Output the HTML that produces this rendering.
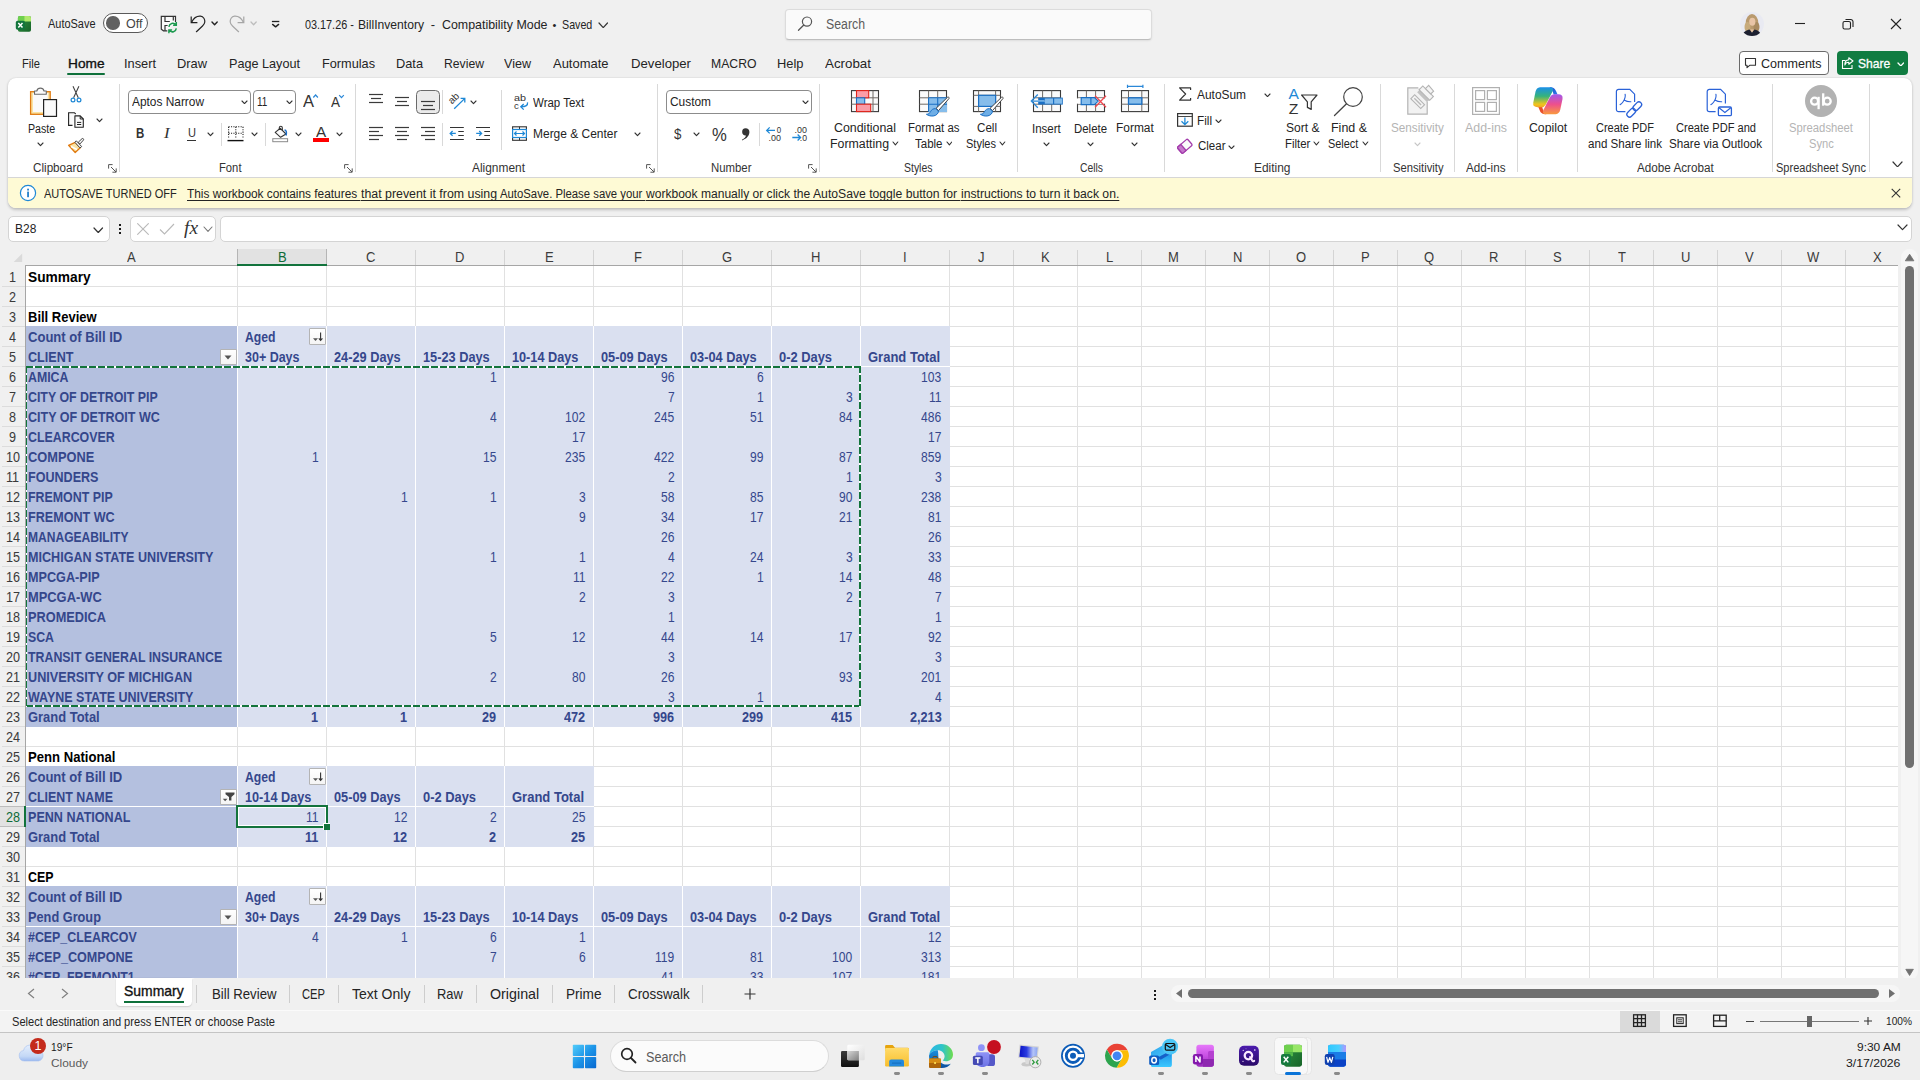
<!DOCTYPE html>
<html lang="en"><head><meta charset="utf-8"><title>03.17.26 - BillInventory - Excel</title>
<style>
*{margin:0;padding:0;box-sizing:border-box}
html,body{width:1920px;height:1080px;overflow:hidden;background:#f0f0f0}
body{position:relative;font-family:"Liberation Sans",sans-serif;color:#242424}
.a{position:absolute;display:block}
.t{position:absolute;display:block;white-space:nowrap;transform-origin:0 0;line-height:normal;font-family:"Liberation Sans",sans-serif}
.b{font-weight:bold}
.i{font-style:italic}
.sf{font-family:"Liberation Serif",serif}
.gl{position:absolute;left:0;top:0;right:0;bottom:0}
.gl i{position:absolute;top:0;bottom:0;width:1px;background:#e1e1e1}
.gl b{position:absolute;left:0;right:0;height:1px;background:#e1e1e1}
</style></head>
<body>
<svg class="a" style="left:14px;top:14px" width="19" height="20" viewBox="14 14 19 20"><defs><linearGradient id="xa1" x1="0" y1="0" x2="1" y2="1"><stop offset="0" stop-color="#2f9444"/><stop offset="1" stop-color="#176428"/></linearGradient></defs><rect x="17.900" y="16.100" width="13.100" height="15.600" rx="1.800" fill="url(#xa1)"/><path d="M17.900 17.900a1.800 1.800 0 0 1 1.800-1.800h4.500v5.300h-6.300z" fill="#6fd04e"/><path d="M24.200 16.100h5a1.800 1.800 0 0 1 1.800 1.800v3.500h-6.800z" fill="#b0ea6c"/><rect x="15.800" y="20.700" width="9.200" height="9.100" rx="1.800" fill="#12753c"/><path d="M18.300 23l4.200 4.600M22.500 23l-4.200 4.600" stroke="#fff" stroke-width="1.500"/></svg>
<span class="t" style="left:48.30px;top:16.67px;font-size:12.3px;transform:scaleX(0.8905);color:#242424;">AutoSave</span>
<div class="a" style="left:103px;top:13px;width:45px;height:20px;background:#fff;border:1px solid #5a5a5a;border-radius:10px;"></div>
<div class="a" style="left:106.2px;top:16.3px;width:13.4px;height:13.4px;background:#616161;border-radius:50%;"></div>
<span class="t" style="left:125.50px;top:16.67px;font-size:12.3px;transform:scaleX(1.0198);color:#444;">Off</span>
<svg class="a" style="left:159px;top:14px" width="21" height="20" viewBox="159 14 21 20"><path d="M175.500 22V16.400H161.300V29.200L163.500 30.800H167.300" fill="#fafafa" stroke="#333" stroke-width="1.200"/><path d="M165 16.400V21.500H169.800M173.300 16.400V20.600M165 30.800V25.500H167.600" fill="none" stroke="#333" stroke-width="1.200"/><path d="M168.900 26.800a3.900 3.900 0 0 1 6.900-2M176.300 22v3.200h-3.200M176.300 28.400a3.900 3.900 0 0 1-6.900 2M168.900 33.200v-3.200h3.200" fill="none" stroke="#1d9a50" stroke-width="1.500"/></svg>
<svg class="a" style="left:189px;top:14px" width="19" height="20" viewBox="189 14 19 20"><path d="M191.200 16.400V22.600H197.400" fill="none" stroke="#222" stroke-width="1.200"/><path d="M191.600 22.300C193.800 17.800 197.800 16 200.500 16.200 203.600 16.500 205 19.500 204.800 22 204.600 24 203.600 25 202.500 26L196.400 31.700" fill="none" stroke="#222" stroke-width="1.200" stroke-linecap="round"/></svg>
<svg class="a" style="left:211.0px;top:20.95px;" width="7.2" height="4.7" viewBox="0 0 7.2 4.7"><path d="M1 1 L3.6 3.7 L6.2 1" fill="none" stroke="#222" stroke-width="1.4" stroke-linecap="round" stroke-linejoin="round"/></svg>
<svg class="a" style="left:228px;top:14px" width="19" height="20" viewBox="228 14 19 20"><path d="M243.800 16.400V22.600H237.600" fill="none" stroke="#a6a6a6" stroke-width="1.200"/><path d="M243.400 22.300C241.200 17.800 237.200 16 234.500 16.200 231.400 16.500 230 19.500 230.200 22 230.400 24 231.400 25 232.500 26L238.600 31.700" fill="none" stroke="#a6a6a6" stroke-width="1.200" stroke-linecap="round"/></svg>
<svg class="a" style="left:249.9px;top:20.95px;" width="7.2" height="4.7" viewBox="0 0 7.2 4.7"><path d="M1 1 L3.6 3.7 L6.2 1" fill="none" stroke="#bdbdbd" stroke-width="1.3" stroke-linecap="round" stroke-linejoin="round"/></svg>
<svg class="a" style="left:270px;top:19px" width="12" height="10" viewBox="270 19 12 10"><path d="M271.900 21.500h7.400" stroke="#222" stroke-width="1.300"/><path d="M272.600 24.400 275.600 26.900l3-2.500" fill="none" stroke="#222" stroke-width="1.400" stroke-linecap="round" stroke-linejoin="round"/></svg>
<span class="t" style="left:305.00px;top:17.23px;font-size:13px;transform:scaleX(0.8335);color:#242424;">03.17.26 -</span>
<span class="t" style="left:358.00px;top:17.23px;font-size:13px;transform:scaleX(0.9335);color:#242424;">BillInventory</span>
<span class="t" style="left:430.70px;top:17.23px;font-size:13px;color:#242424;">-</span>
<span class="t" style="left:441.60px;top:17.23px;font-size:13px;transform:scaleX(0.9543);color:#242424;">Compatibility Mode</span>
<span class="t" style="left:552.50px;top:19.05px;font-size:11px;color:#242424;">•</span>
<span class="t" style="left:562.40px;top:17.23px;font-size:13px;transform:scaleX(0.8220);color:#242424;">Saved</span>
<svg class="a" style="left:597.75px;top:21.7px;" width="10.5" height="6.6" viewBox="0 0 10.5 6.6"><path d="M1 1 L5.25 5.6 L9.5 1" fill="none" stroke="#333" stroke-width="1.2" stroke-linecap="round" stroke-linejoin="round"/></svg>
<div class="a" style="left:785px;top:8.5px;width:367px;height:31px;background:#fafafa;border:1px solid #dcdcdc;border-bottom-color:#bdbdbd;border-radius:4px;box-shadow:0 1px 2px rgba(0,0,0,.08);"></div>
<svg class="a" style="left:797px;top:15px;" width="17" height="17" viewBox="0 0 17 17"><circle cx="10" cy="6.600" r="4.600" fill="none" stroke="#555" stroke-width="1.200"/><path d="M6.800 10 1.500 15.300" stroke="#555" stroke-width="1.300" stroke-linecap="round"/></svg>
<span class="t" style="left:825.80px;top:16.13px;font-size:14px;transform:scaleX(0.8792);color:#5c5c5c;">Search</span>
<div class="a" style="left:1740px;top:12px;width:24px;height:24px;border-radius:50%;overflow:hidden;background:#e9eaf2;"><svg width="24" height="24" viewBox="0 0 24 24" style="display:block"><ellipse cx="12" cy="11" rx="6.300" ry="9" fill="#b99a6e"/><ellipse cx="7.500" cy="15" rx="3" ry="5" fill="#c7aa7c"/><ellipse cx="16.500" cy="15" rx="3" ry="5" fill="#a88a60"/><ellipse cx="12.300" cy="9.800" rx="3.100" ry="4" fill="#e8c4a6"/><path d="M2 24c1-4 4.500-6 7.500-6.500l2.500 3 2.500-3c3.500.5 6 2.500 7 6.500z" fill="#1d2030"/><path d="M10.200 17.500l1.800 3 1.800-3z" fill="#e8c4a6"/></svg></div>
<svg class="a" style="left:1794px;top:18px;" width="12" height="12" viewBox="0 0 12 12"><path d="M1 5.500h10" stroke="#222" stroke-width="1.100"/></svg>
<svg class="a" style="left:1842px;top:18px;" width="12" height="12" viewBox="0 0 12 12"><rect x="1" y="3.500" width="7.500" height="7.500" rx="1.600" fill="none" stroke="#222" stroke-width="1.100"/><path d="M3.500 1.500h5.200a2.300 2.300 0 0 1 2.300 2.300v5.200" fill="none" stroke="#222" stroke-width="1.100"/></svg>
<svg class="a" style="left:1890px;top:18px;" width="12" height="12" viewBox="0 0 12 12"><path d="M1 1l10 10M11 1 1 11" stroke="#222" stroke-width="1.100"/></svg>
<span class="t" style="left:22.00px;top:55.78px;font-size:13.5px;transform:scaleX(0.8274);color:#242424;">File</span>
<span class="t" style="left:67.50px;top:55.78px;font-size:13.5px;transform:scaleX(1.0135);color:#111;-webkit-text-stroke:0.35px #111;">Home</span>
<span class="t" style="left:124.00px;top:55.78px;font-size:13.5px;transform:scaleX(0.9478);color:#242424;">Insert</span>
<span class="t" style="left:177.00px;top:55.78px;font-size:13.5px;transform:scaleX(0.9523);color:#242424;">Draw</span>
<span class="t" style="left:229.00px;top:55.78px;font-size:13.5px;transform:scaleX(0.9365);color:#242424;">Page Layout</span>
<span class="t" style="left:322.00px;top:55.78px;font-size:13.5px;transform:scaleX(0.9420);color:#242424;">Formulas</span>
<span class="t" style="left:396.00px;top:55.78px;font-size:13.5px;transform:scaleX(0.9468);color:#242424;">Data</span>
<span class="t" style="left:444.00px;top:55.78px;font-size:13.5px;transform:scaleX(0.9036);color:#242424;">Review</span>
<span class="t" style="left:504.00px;top:55.78px;font-size:13.5px;transform:scaleX(0.9304);color:#242424;">View</span>
<span class="t" style="left:553.00px;top:55.78px;font-size:13.5px;transform:scaleX(0.9605);color:#242424;">Automate</span>
<span class="t" style="left:631.00px;top:55.78px;font-size:13.5px;transform:scaleX(0.9750);color:#242424;">Developer</span>
<span class="t" style="left:711.00px;top:55.78px;font-size:13.5px;transform:scaleX(0.9055);color:#242424;">MACRO</span>
<span class="t" style="left:777.00px;top:55.78px;font-size:13.5px;transform:scaleX(0.9544);color:#242424;">Help</span>
<span class="t" style="left:825.00px;top:55.78px;font-size:13.5px;transform:scaleX(0.9887);color:#242424;">Acrobat</span>
<div class="a" style="left:67px;top:73px;width:38px;height:2.2px;background:#0e703a;border-radius:1.1px;"></div>
<div class="a" style="left:1739px;top:51px;width:90px;height:24px;background:#fff;border:1px solid #6a6a6a;border-radius:4px;"></div>
<svg class="a" style="left:1744px;top:57px;" width="13" height="12" viewBox="0 0 13 12"><path d="M1.500 1.500h10v6.800h-5.800l-2.700 2.400v-2.400h-1.500z" fill="none" stroke="#333" stroke-width="1.100" stroke-linejoin="round"/></svg>
<span class="t" style="left:1760.60px;top:55.58px;font-size:13.5px;transform:scaleX(0.9285);color:#242424;">Comments</span>
<div class="a" style="left:1837px;top:51px;width:71px;height:24px;background:#107c41;border-radius:4px;"></div>
<svg class="a" style="left:1841px;top:56px;" width="14" height="14" viewBox="0 0 14 14"><path d="M4.500 4.500h-3v8h9.500v-3.500" fill="none" stroke="#fff" stroke-width="1.100"/><path d="M7.800 1.800 12 5 7.800 8.200v-2C5.500 6.200 4.300 7.300 3.800 9c0-3 1.400-5 4-5.200z" fill="none" stroke="#fff" stroke-width="1.100" stroke-linejoin="round"/></svg>
<span class="t" style="left:1858.30px;top:55.58px;font-size:13.5px;transform:scaleX(0.8966);color:#fff;-webkit-text-stroke:0.3px #fff;">Share</span>
<svg class="a" style="left:1896.7px;top:61.55px;" width="7.6" height="4.9" viewBox="0 0 7.6 4.9"><path d="M1 1 L3.8 3.9 L6.6 1" fill="none" stroke="#fff" stroke-width="1.3" stroke-linecap="round" stroke-linejoin="round"/></svg>
<div class="a" style="left:8px;top:78px;width:1904px;height:130px;background:#fff;border-radius:8px;box-shadow:0 1.500px 3px rgba(0,0,0,.20),0 0 1.500px rgba(0,0,0,.10);"></div>
<div class="a" style="left:8px;top:177px;width:1904px;height:31px;background:#fefad5;border-radius:0 0 8px 8px;border-top:1px solid #d6d6d6;"></div>
<svg class="a" style="left:19px;top:184px;" width="18" height="18" viewBox="0 0 18 18"><circle cx="9" cy="9" r="7.600" fill="#fff" stroke="#1e88d6" stroke-width="1.200"/><rect x="8.200" y="7.600" width="1.700" height="5.600" fill="#1478c8"/><rect x="8.200" y="4.700" width="1.700" height="1.800" fill="#1478c8"/></svg>
<span class="t" style="left:44.00px;top:186.84px;font-size:12px;transform:scaleX(0.9171);color:#242424;">AUTOSAVE TURNED OFF</span>
<span class="t" style="left:187.00px;top:186.84px;font-size:12px;transform:scaleX(0.9890);color:#242424;text-decoration:underline;white-space:pre;text-decoration-skip-ink:none;text-underline-offset:1.5px;text-decoration-thickness:1px;">This workbook contains features </span>
<span class="t" style="left:360.50px;top:186.84px;font-size:12px;transform:scaleX(1.0303);color:#242424;text-decoration:underline;white-space:pre;text-decoration-skip-ink:none;text-underline-offset:1.5px;text-decoration-thickness:1px;">that prevent it from using </span>
<span class="t" style="left:500.00px;top:186.84px;font-size:12px;transform:scaleX(0.9442);color:#242424;text-decoration:underline;white-space:pre;text-decoration-skip-ink:none;text-underline-offset:1.5px;text-decoration-thickness:1px;">AutoSave. Please save your </span>
<span class="t" style="left:645.50px;top:186.84px;font-size:12px;transform:scaleX(1.0046);color:#242424;text-decoration:underline;white-space:pre;text-decoration-skip-ink:none;text-underline-offset:1.5px;text-decoration-thickness:1px;">workbook manually or click the </span>
<span class="t" style="left:813.00px;top:186.84px;font-size:12px;transform:scaleX(1.0142);color:#242424;text-decoration:underline;white-space:pre;text-decoration-skip-ink:none;text-underline-offset:1.5px;text-decoration-thickness:1px;">AutoSave toggle button for </span>
<span class="t" style="left:960.50px;top:186.84px;font-size:12px;transform:scaleX(1.0142);color:#242424;text-decoration:underline;white-space:pre;text-decoration-skip-ink:none;text-underline-offset:1.5px;text-decoration-thickness:1px;">instructions to turn it back on.</span>
<svg class="a" style="left:1890px;top:187px" width="12" height="12" viewBox="1890 187 12 12"><path d="M1891.700 188.900l8.500 8.400M1900.200 188.900l-8.500 8.400" stroke="#333" stroke-width="1.100"/></svg>
<div class="a" style="left:8px;top:216px;width:102px;height:26px;background:#fff;border:1px solid #d4d4d4;border-radius:5px;"></div>
<span class="t" style="left:15.00px;top:221.48px;font-size:13.5px;transform:scaleX(0.8867);color:#242424;">B28</span>
<svg class="a" style="left:93.05px;top:226.75px;" width="10.5" height="6.5" viewBox="0 0 10.5 6.5"><path d="M1 1 L5.25 5.5 L9.5 1" fill="none" stroke="#333" stroke-width="1.2" stroke-linecap="round" stroke-linejoin="round"/></svg>
<div class="a" style="left:119px;top:224px;width:2px;height:2px;background:#1a1a1a;"></div>
<div class="a" style="left:119px;top:228px;width:2px;height:2px;background:#1a1a1a;"></div>
<div class="a" style="left:119px;top:232px;width:2px;height:2px;background:#1a1a1a;"></div>
<div class="a" style="left:130px;top:216px;width:86px;height:26px;background:#fff;border:1px solid #d4d4d4;border-radius:5px;"></div>
<svg class="a" style="left:137px;top:223px;" width="12" height="12" viewBox="0 0 12 12"><path d="M.300 .300l11.400 11.400M11.700 .300.300 11.700" stroke="#b9b9b9" stroke-width="1.100"/></svg>
<svg class="a" style="left:159px;top:223px;" width="16" height="12" viewBox="0 0 16 12"><path d="M1 6.500 5.500 11 15 1" fill="none" stroke="#b9b9b9" stroke-width="1.100"/></svg>
<span class="t i sf" style="left:184.00px;top:217.96px;font-size:18px;transform:scaleX(1.0778);color:#333;">fx</span>
<svg class="a" style="left:203.0px;top:226.35px;" width="10" height="6.3" viewBox="0 0 10 6.3"><path d="M1 1 L5.0 5.3 L9 1" fill="none" stroke="#777" stroke-width="1.1" stroke-linecap="round" stroke-linejoin="round"/></svg>
<div class="a" style="left:220px;top:216px;width:1692px;height:26px;background:#fff;border:1px solid #d4d4d4;border-radius:5px;"></div>
<svg class="a" style="left:1897.0px;top:224.3px;" width="11" height="6.6" viewBox="0 0 11 6.6"><path d="M1 1 L5.5 5.6 L10 1" fill="none" stroke="#333" stroke-width="1.2" stroke-linecap="round" stroke-linejoin="round"/></svg>
<svg class="a" style="left:28px;top:85px" width="32" height="34" viewBox="28 85 32 34"><rect x="30.600" y="91.700" width="19.600" height="22.600" fill="#fbe3a2" stroke="#e07a10" stroke-width="1.300"/><rect x="33" y="93" width="14.800" height="19" fill="#fafafa"/><path d="M34.500 94.200v-3.200h2.300a3.700 3.700 0 0 1 7.200 0h2.300v3.200z" fill="#fafafa" stroke="#6a6a6a" stroke-width="1.100" stroke-linejoin="round"/><rect x="43.600" y="99.600" width="12.900" height="16.800" fill="#fafafa" stroke="#222" stroke-width="1.200"/></svg>
<span class="t" style="left:27.80px;top:121.94px;font-size:12px;transform:scaleX(0.8864);color:#242424;">Paste</span>
<svg class="a" style="left:37.0px;top:142.2px;" width="7" height="4.6" viewBox="0 0 7 4.6"><path d="M1 1 L3.5 3.6 L6 1" fill="none" stroke="#333" stroke-width="1.1" stroke-linecap="round" stroke-linejoin="round"/></svg>
<svg class="a" style="left:69px;top:85px" width="15" height="19" viewBox="69 85 15 19"><path d="M73 86.300 78.300 97.800M78.900 86.300 73.600 97.800" stroke="#444" stroke-width="1.100" fill="none"/><circle cx="73" cy="100" r="1.900" fill="none" stroke="#1e88d6" stroke-width="1.200"/><circle cx="79" cy="100" r="1.900" fill="none" stroke="#1e88d6" stroke-width="1.200"/></svg>
<svg class="a" style="left:66px;top:110px" width="20" height="20" viewBox="66 110 20 20"><path d="M72.500 125.400H68.600V112.700h5.800l1.300 1.300" fill="#fafafa" stroke="#222" stroke-width="1.100"/><path d="M74.900 115.900h5.300l3.100 3.100v8.200h-8.400z" fill="#fafafa" stroke="#222" stroke-width="1.100" stroke-linejoin="round"/><path d="M80.200 115.900v3.100h3.100M77 122.400h4.200M77 124.500h4.200" fill="none" stroke="#222" stroke-width="1"/></svg>
<svg class="a" style="left:95.9px;top:118.3px;" width="7" height="4.6" viewBox="0 0 7 4.6"><path d="M1 1 L3.5 3.6 L6 1" fill="none" stroke="#333" stroke-width="1.1" stroke-linecap="round" stroke-linejoin="round"/></svg>
<svg class="a" style="left:66px;top:136px" width="21" height="19" viewBox="66 136 21 19"><path d="M68.600 145.300 75.200 142.300 80.300 147.800 75.200 152.500z" fill="#fbe3a2" stroke="#e07a10" stroke-width="1.300" stroke-linejoin="round"/><path d="M71 146.500l6 3" stroke="#fff" stroke-width="1.400"/><path d="M76.300 140.800 81.700 146.600 80 147.900 74.900 142.300z" fill="#fafafa" stroke="#444" stroke-width="1"/><path d="M78.300 142.200 82 138.700c.900-.800 2.200.500 1.400 1.400L80 143.900z" fill="#fafafa" stroke="#444" stroke-width="1"/></svg>
<span class="t" style="left:32.50px;top:161.14px;font-size:12px;transform:scaleX(0.9734);color:#333;">Clipboard</span>
<svg class="a" style="left:108px;top:164px;" width="9" height="9" viewBox="0 0 9 9"><path d="M.6 4.600V.6h4M3 3l5 5M8.200 4.400v3.800H4.400" fill="none" stroke="#555" stroke-width="1"/></svg>
<div class="a" style="left:119.0px;top:84px;width:1px;height:88px;background:#d9d9d9;"></div>
<div class="a" style="left:128px;top:90px;width:123px;height:24px;background:#fff;border:1px solid #8c8c8c;border-radius:4px;"></div>
<span class="t" style="left:131.80px;top:94.08px;font-size:13.5px;transform:scaleX(0.8804);color:#242424;">Aptos Narrow</span>
<svg class="a" style="left:240.5px;top:99.7px;" width="7" height="4.6" viewBox="0 0 7 4.6"><path d="M1 1 L3.5 3.6 L6 1" fill="none" stroke="#333" stroke-width="1.1" stroke-linecap="round" stroke-linejoin="round"/></svg>
<div class="a" style="left:253px;top:90px;width:43px;height:24px;background:#fff;border:1px solid #8c8c8c;border-radius:4px;"></div>
<span class="t" style="left:256.80px;top:94.08px;font-size:13.5px;transform:scaleX(0.7349);color:#242424;">11</span>
<svg class="a" style="left:285.5px;top:99.7px;" width="7" height="4.6" viewBox="0 0 7 4.6"><path d="M1 1 L3.5 3.6 L6 1" fill="none" stroke="#333" stroke-width="1.1" stroke-linecap="round" stroke-linejoin="round"/></svg>
<span class="t" style="left:303.00px;top:91.61px;font-size:17px;transform:scaleX(0.9701);color:#333;">A</span>
<svg class="a" style="left:312px;top:93px" width="8" height="7" viewBox="312 93 8 7"><path d="M313.300 97.500 315.600 95l2.300 2.500" fill="none" stroke="#2b88d8" stroke-width="1.200"/></svg>
<span class="t" style="left:330.50px;top:94.33px;font-size:14px;transform:scaleX(0.9638);color:#333;">A</span>
<svg class="a" style="left:338px;top:93px" width="8" height="7" viewBox="338 93 8 7"><path d="M339.200 95.200 341.500 97.700l2.300-2.500" fill="none" stroke="#2b88d8" stroke-width="1.200"/></svg>
<span class="t b" style="left:136.30px;top:125.33px;font-size:14px;transform:scaleX(0.8209);color:#333;">B</span>
<span class="t i sf" style="left:164.00px;top:124.81px;font-size:14.8px;transform:scaleX(1.1361);color:#333;">I</span>
<span class="t" style="left:187.50px;top:125.28px;font-size:13.5px;transform:scaleX(0.8206);color:#333;">U</span>
<div class="a" style="left:187.3px;top:139.7px;width:8.5px;height:1px;background:#333;"></div>
<svg class="a" style="left:207.0px;top:132.0px;" width="7" height="4.6" viewBox="0 0 7 4.6"><path d="M1 1 L3.5 3.6 L6 1" fill="none" stroke="#333" stroke-width="1.1" stroke-linecap="round" stroke-linejoin="round"/></svg>
<div class="a" style="left:221.0px;top:122.5px;width:1px;height:23.0px;background:#d9d9d9;"></div>
<svg class="a" style="left:227px;top:125px" width="18" height="18" viewBox="227 125 18 18"><path d="M227.500 140.600h16" stroke="#111" stroke-width="1.400"/><path d="M228.600 126.800h14.500M228.600 133.300h14.500M228.600 126.800v12M235.800 126.800v12M243 126.800v12" fill="none" stroke="#222" stroke-width="1.100" stroke-dasharray="1.100 1.300"/></svg>
<svg class="a" style="left:251.0px;top:132.0px;" width="7" height="4.6" viewBox="0 0 7 4.6"><path d="M1 1 L3.5 3.6 L6 1" fill="none" stroke="#333" stroke-width="1.1" stroke-linecap="round" stroke-linejoin="round"/></svg>
<div class="a" style="left:265.0px;top:122.5px;width:1px;height:23.0px;background:#d9d9d9;"></div>
<svg class="a" style="left:271px;top:124px" width="19" height="19" viewBox="271 124 19 19"><path d="M280.300 128.300 286 134 280.600 137.300 275.200 132.400z" fill="#fafafa" stroke="#333" stroke-width="1.100" stroke-linejoin="round"/><path d="M279.300 129.300v-1.600a1.500 1.500 0 0 1 3 0v2.800" fill="none" stroke="#333" stroke-width="1.100"/><path d="M284.500 130c1.800.200 2.300 1.700 1.600 5.500" fill="none" stroke="#1e6fc8" stroke-width="1.500"/><rect x="272.800" y="138.700" width="14.800" height="3" fill="#fff" stroke="#8a8a8a" stroke-width="1"/></svg>
<svg class="a" style="left:294.5px;top:132.0px;" width="7" height="4.6" viewBox="0 0 7 4.6"><path d="M1 1 L3.5 3.6 L6 1" fill="none" stroke="#333" stroke-width="1.1" stroke-linecap="round" stroke-linejoin="round"/></svg>
<span class="t" style="left:316.00px;top:123.59px;font-size:14.6px;transform:scaleX(1.0474);color:#333;">A</span>
<div class="a" style="left:313px;top:138px;width:16.2px;height:4px;background:#f00;"></div>
<svg class="a" style="left:335.5px;top:132.0px;" width="7" height="4.6" viewBox="0 0 7 4.6"><path d="M1 1 L3.5 3.6 L6 1" fill="none" stroke="#333" stroke-width="1.1" stroke-linecap="round" stroke-linejoin="round"/></svg>
<span class="t" style="left:218.80px;top:161.14px;font-size:12px;transform:scaleX(0.9370);color:#333;">Font</span>
<svg class="a" style="left:344px;top:164px;" width="9" height="9" viewBox="0 0 9 9"><path d="M.6 4.600V.6h4M3 3l5 5M8.200 4.400v3.800H4.400" fill="none" stroke="#555" stroke-width="1"/></svg>
<div class="a" style="left:355.0px;top:84px;width:1px;height:88px;background:#d9d9d9;"></div>
<div class="a" style="left:416px;top:90px;width:24px;height:24px;background:#ebebeb;border:1.200px solid #6a6a6a;border-radius:4.500px;"></div>
<svg class="a" style="left:368px;top:93px" width="16" height="11" viewBox="368 93 16 11"><path d="M369 94.5H383" stroke="#3b3b3b" stroke-width="1.200"/><path d="M371.0 98.5H381.0" stroke="#3b3b3b" stroke-width="1.200"/><path d="M369 102.5H383" stroke="#3b3b3b" stroke-width="1.200"/></svg>
<svg class="a" style="left:394px;top:96px" width="16" height="11" viewBox="394 96 16 11"><path d="M395 97.5H409" stroke="#3b3b3b" stroke-width="1.200"/><path d="M397.0 101.5H407.0" stroke="#3b3b3b" stroke-width="1.200"/><path d="M395 105.5H409" stroke="#3b3b3b" stroke-width="1.200"/></svg>
<svg class="a" style="left:420px;top:100px" width="16" height="11" viewBox="420 100 16 11"><path d="M421 101.5H435" stroke="#3b3b3b" stroke-width="1.200"/><path d="M423.0 105.5H433.0" stroke="#3b3b3b" stroke-width="1.200"/><path d="M421 109.5H435" stroke="#3b3b3b" stroke-width="1.200"/></svg>
<div class="a" style="left:442.0px;top:90px;width:1px;height:24px;background:#d9d9d9;"></div>
<svg class="a" style="left:446px;top:90px" width="22" height="22" viewBox="446 90 22 22"><text x="0" y="0" font-size="10" font-family="Liberation Sans,sans-serif" fill="#333" transform="translate(452 104.600) rotate(-45)">ab</text><path d="M454.200 108.800 464.600 98.600M460.600 98.400h4.200v4" fill="none" stroke="#1e88d6" stroke-width="1.300"/></svg>
<svg class="a" style="left:470.0px;top:100.0px;" width="7" height="4.6" viewBox="0 0 7 4.6"><path d="M1 1 L3.5 3.6 L6 1" fill="none" stroke="#333" stroke-width="1.1" stroke-linecap="round" stroke-linejoin="round"/></svg>
<svg class="a" style="left:368px;top:126px" width="16" height="15" viewBox="368 126 16 15"><path d="M369 127.5H383" stroke="#3b3b3b" stroke-width="1.200"/><path d="M369 131.5H379" stroke="#3b3b3b" stroke-width="1.200"/><path d="M369 135.5H383" stroke="#3b3b3b" stroke-width="1.200"/><path d="M369 139.5H379" stroke="#3b3b3b" stroke-width="1.200"/></svg>
<svg class="a" style="left:394px;top:126px" width="16" height="15" viewBox="394 126 16 15"><path d="M395 127.5H409" stroke="#3b3b3b" stroke-width="1.200"/><path d="M397.0 131.5H407.0" stroke="#3b3b3b" stroke-width="1.200"/><path d="M395 135.5H409" stroke="#3b3b3b" stroke-width="1.200"/><path d="M397.0 139.5H407.0" stroke="#3b3b3b" stroke-width="1.200"/></svg>
<svg class="a" style="left:420px;top:126px" width="16" height="15" viewBox="420 126 16 15"><path d="M421 127.5H435" stroke="#3b3b3b" stroke-width="1.200"/><path d="M425 131.5H435" stroke="#3b3b3b" stroke-width="1.200"/><path d="M421 135.5H435" stroke="#3b3b3b" stroke-width="1.200"/><path d="M425 139.5H435" stroke="#3b3b3b" stroke-width="1.200"/></svg>
<div class="a" style="left:442.0px;top:122.5px;width:1px;height:23.0px;background:#d9d9d9;"></div>
<svg class="a" style="left:449px;top:126px" width="16" height="15" viewBox="449 126 16 15"><path d="M450 127.500h13.800M458.300 131.500h5.500M458.300 135.500h5.500M450 139.500h13.800" stroke="#333" stroke-width="1.100"/><path d="M455.800 133.400h-5.400M452.600 131 450.200 133.400l2.400 2.400" fill="none" stroke="#1e88d6" stroke-width="1.300"/></svg>
<svg class="a" style="left:475px;top:126px" width="16" height="15" viewBox="475 126 16 15"><path d="M476 127.500h14M484.300 131.500h5.700M484.300 135.500h5.700M476 139.500h14" stroke="#333" stroke-width="1.100"/><path d="M476.200 133.400h5.400M479.200 131l2.400 2.400-2.400 2.400" fill="none" stroke="#1e88d6" stroke-width="1.300"/></svg>
<div class="a" style="left:500.8px;top:89.5px;width:1px;height:60.5px;background:#d9d9d9;"></div>
<svg class="a" style="left:513px;top:92px" width="17" height="20" viewBox="513 92 17 20"><text x="514" y="101.100" font-size="9.600" font-family="Liberation Sans,sans-serif" fill="#333" textLength="12" lengthAdjust="spacingAndGlyphs">ab</text><text x="514" y="108.700" font-size="9.600" font-family="Liberation Sans,sans-serif" fill="#333">c</text><path d="M527.500 102.300c.500 3-1.500 4.400-6.500 4.400M523.700 104 520.800 106.700l2.900 2.900" fill="none" stroke="#1e88d6" stroke-width="1.300"/></svg>
<span class="t" style="left:532.50px;top:95.69px;font-size:12.5px;transform:scaleX(0.9192);color:#242424;">Wrap Text</span>
<svg class="a" style="left:511px;top:125px" width="17" height="17" viewBox="511 125 17 17"><rect x="512.600" y="126.800" width="13.800" height="13.500" fill="#fafafa" stroke="#333" stroke-width="1.100"/><path d="M519.500 126.800v13.500" stroke="#333" stroke-width="1"/><rect x="512.600" y="129.500" width="13.800" height="8" fill="#fff" stroke="#1e88d6" stroke-width="1.200"/><path d="M514.500 133.500h10M516.500 131.500l-2 2 2 2M522.500 131.500l2 2-2 2" fill="none" stroke="#1e88d6" stroke-width="1.200"/></svg>
<span class="t" style="left:532.50px;top:127.49px;font-size:12.5px;transform:scaleX(0.9577);color:#242424;">Merge &amp; Center</span>
<svg class="a" style="left:634.0px;top:132.0px;" width="7" height="4.6" viewBox="0 0 7 4.6"><path d="M1 1 L3.5 3.6 L6 1" fill="none" stroke="#333" stroke-width="1.1" stroke-linecap="round" stroke-linejoin="round"/></svg>
<span class="t" style="left:472.00px;top:161.14px;font-size:12px;transform:scaleX(0.9932);color:#333;">Alignment</span>
<svg class="a" style="left:646px;top:164px;" width="9" height="9" viewBox="0 0 9 9"><path d="M.6 4.600V.6h4M3 3l5 5M8.200 4.400v3.800H4.400" fill="none" stroke="#555" stroke-width="1"/></svg>
<div class="a" style="left:657.0px;top:84px;width:1px;height:88px;background:#d9d9d9;"></div>
<div class="a" style="left:666px;top:90px;width:146px;height:24px;background:#fff;border:1px solid #8c8c8c;border-radius:4px;"></div>
<span class="t" style="left:669.50px;top:94.08px;font-size:13.5px;transform:scaleX(0.8815);color:#242424;">Custom</span>
<svg class="a" style="left:801.5px;top:99.7px;" width="7" height="4.6" viewBox="0 0 7 4.6"><path d="M1 1 L3.5 3.6 L6 1" fill="none" stroke="#333" stroke-width="1.1" stroke-linecap="round" stroke-linejoin="round"/></svg>
<span class="t" style="left:673.80px;top:125.27px;font-size:15.5px;transform:scaleX(0.8584);color:#333;">$</span>
<svg class="a" style="left:692.9px;top:132.0px;" width="7" height="4.6" viewBox="0 0 7 4.6"><path d="M1 1 L3.5 3.6 L6 1" fill="none" stroke="#333" stroke-width="1.1" stroke-linecap="round" stroke-linejoin="round"/></svg>
<span class="t" style="left:711.60px;top:123.61px;font-size:19px;transform:scaleX(0.8761);color:#333;">%</span>
<svg class="a" style="left:740px;top:127px" width="12" height="15" viewBox="740 127 12 15"><path d="M745.600 128.200a3.700 3.700 0 0 1 3.800 3.900c0 3.600-2.500 6.600-7.200 8.300l-.300-.700c2.500-1.200 3.800-2.700 4-4.300a3.600 3.600 0 0 1-.300-7.200z" fill="#333"/></svg>
<div class="a" style="left:759.0px;top:122.5px;width:1px;height:23.0px;background:#d9d9d9;"></div>
<svg class="a" style="left:765px;top:124px" width="18" height="19" viewBox="765 124 18 19"><path d="M775 130.400h-8.300M769.700 127.400l-3 3 3 3" fill="none" stroke="#1e88d6" stroke-width="1.300"/><text x="776.800" y="132.600" font-size="9" font-family="Liberation Sans,sans-serif" fill="#333" textLength="4.400" lengthAdjust="spacingAndGlyphs">0</text><text x="768.600" y="141" font-size="9" font-family="Liberation Sans,sans-serif" fill="#333" textLength="12.400" lengthAdjust="spacingAndGlyphs">.00</text></svg>
<svg class="a" style="left:791px;top:124px" width="18" height="19" viewBox="791 124 18 19"><text x="794.600" y="132.600" font-size="9" font-family="Liberation Sans,sans-serif" fill="#333" textLength="12.400" lengthAdjust="spacingAndGlyphs">.00</text><path d="M792.300 137.500h8.300M797.600 134.500l3 3-3 3" fill="none" stroke="#1e88d6" stroke-width="1.300"/><text x="799.800" y="141" font-size="9" font-family="Liberation Sans,sans-serif" fill="#333" textLength="7.200" lengthAdjust="spacingAndGlyphs">.0</text></svg>
<span class="t" style="left:710.50px;top:161.14px;font-size:12px;transform:scaleX(0.9489);color:#333;">Number</span>
<svg class="a" style="left:807.5px;top:164px;" width="9" height="9" viewBox="0 0 9 9"><path d="M.6 4.600V.6h4M3 3l5 5M8.200 4.400v3.800H4.400" fill="none" stroke="#555" stroke-width="1"/></svg>
<div class="a" style="left:819.0px;top:84px;width:1px;height:88px;background:#d9d9d9;"></div>
<svg class="a" style="left:849px;top:88px" width="32" height="26" viewBox="849 88 32 26"><rect x="851.5" y="90.6" width="27.0" height="21.0" fill="#fafafa" stroke="#3b3b3b" stroke-width="1.1"/><path d="M856.5 90.6V111.6" stroke="#6e6a66" stroke-width="1"/><path d="M873 90.6V111.6" stroke="#6e6a66" stroke-width="1"/><path d="M851.5 97.8H878.5" stroke="#6e6a66" stroke-width="1"/><path d="M851.5 104.2H878.5" stroke="#6e6a66" stroke-width="1"/><rect x="856.500" y="90.600" width="12.200" height="7.200" fill="#fb9ca6" stroke="#e0241b" stroke-width="1.100"/><rect x="856.500" y="97.800" width="8.200" height="6.400" fill="#86bdeb" stroke="#1a6fc4" stroke-width="1.100"/><rect x="856.500" y="104.200" width="14.200" height="7.400" fill="#fb9ca6" stroke="#e0241b" stroke-width="1.100"/></svg>
<span class="t" style="left:834.00px;top:121.14px;font-size:12px;transform:scaleX(1.0326);color:#242424;">Conditional</span>
<span class="t" style="left:830.00px;top:137.14px;font-size:12px;transform:scaleX(1.0287);color:#242424;">Formatting</span>
<svg class="a" style="left:891.9px;top:140.8px;" width="6.8" height="4.8" viewBox="0 0 6.8 4.8"><path d="M1 1 L3.4 3.8 L5.8 1" fill="none" stroke="#333" stroke-width="1.1" stroke-linecap="round" stroke-linejoin="round"/></svg>
<svg class="a" style="left:917px;top:88px" width="36" height="31" viewBox="917 88 36 31"><rect x="919.5" y="90.6" width="27.0" height="21.0" fill="#fafafa" stroke="#3b3b3b" stroke-width="1.1"/><path d="M928.6 90.6V111.6" stroke="#6e6a66" stroke-width="1"/><path d="M937.7 90.6V111.6" stroke="#6e6a66" stroke-width="1"/><path d="M919.5 97.8H946.5" stroke="#6e6a66" stroke-width="1"/><path d="M919.5 104.2H946.5" stroke="#6e6a66" stroke-width="1"/><rect x="928.600" y="97.800" width="18.400" height="14.200" fill="#86bdeb"/><path d="M928.600 97.800H947M928.600 104.200H947M928.600 97.800V112M937.700 97.800V112" stroke="#1a6fc4" stroke-width="1.100" fill="none"/><g transform="translate(0 0)"><path d="M947.6 97.2c.9-.5 1.900.300 1.400 1.300L938.500 110.600l-2.500-2.200z" fill="#fff" stroke="#444" stroke-width="1"/><path d="M935.700 108.700l2.700 2.300c.200 2.300-1.800 4.300-4.600 4.900-2.600.500-5.300-.200-7.400-1.600 2.300-.100 3.300-1 4.100-2.600 1-2 2.700-3.300 5.200-3z" fill="#6eaee6" stroke="#1a6fc4" stroke-width="1" stroke-linejoin="round"/></g></svg>
<span class="t" style="left:907.50px;top:121.14px;font-size:12px;transform:scaleX(0.9535);color:#242424;">Format as</span>
<span class="t" style="left:914.50px;top:137.14px;font-size:12px;transform:scaleX(0.9586);color:#242424;">Table</span>
<svg class="a" style="left:945.6px;top:140.8px;" width="6.8" height="4.8" viewBox="0 0 6.8 4.8"><path d="M1 1 L3.4 3.8 L5.8 1" fill="none" stroke="#333" stroke-width="1.1" stroke-linecap="round" stroke-linejoin="round"/></svg>
<svg class="a" style="left:971px;top:88px" width="36" height="31" viewBox="971 88 36 31"><rect x="973.5" y="90.6" width="27.0" height="21.0" fill="#fafafa" stroke="#3b3b3b" stroke-width="1.1"/><path d="M978.6 90.6V111.6" stroke="#6e6a66" stroke-width="1"/><path d="M995.6 90.6V111.6" stroke="#6e6a66" stroke-width="1"/><path d="M973.5 95.3H1000.5" stroke="#6e6a66" stroke-width="1"/><path d="M973.5 106.4H1000.5" stroke="#6e6a66" stroke-width="1"/><rect x="978.600" y="95.300" width="17" height="11.100" fill="#86bdeb" stroke="#1a6fc4" stroke-width="1.200"/><g transform="translate(54 0)"><path d="M947.6 97.2c.9-.5 1.900.300 1.400 1.300L938.500 110.600l-2.500-2.200z" fill="#fff" stroke="#444" stroke-width="1"/><path d="M935.700 108.700l2.700 2.300c.200 2.300-1.800 4.300-4.600 4.900-2.600.500-5.300-.200-7.400-1.600 2.300-.100 3.300-1 4.100-2.600 1-2 2.700-3.300 5.200-3z" fill="#6eaee6" stroke="#1a6fc4" stroke-width="1" stroke-linejoin="round"/></g></svg>
<span class="t" style="left:977.00px;top:121.14px;font-size:12px;transform:scaleX(0.9675);color:#242424;">Cell</span>
<span class="t" style="left:966.00px;top:137.14px;font-size:12px;transform:scaleX(0.9180);color:#242424;">Styles</span>
<svg class="a" style="left:999.1px;top:140.8px;" width="6.8" height="4.8" viewBox="0 0 6.8 4.8"><path d="M1 1 L3.4 3.8 L5.8 1" fill="none" stroke="#333" stroke-width="1.1" stroke-linecap="round" stroke-linejoin="round"/></svg>
<span class="t" style="left:904.00px;top:161.14px;font-size:12px;transform:scaleX(0.8721);color:#333;">Styles</span>
<div class="a" style="left:1017.0px;top:84px;width:1px;height:88px;background:#d9d9d9;"></div>
<svg class="a" style="left:1029px;top:84px" width="37" height="30" viewBox="1029 84 37 30"><rect x="1033.5" y="90.6" width="27.0" height="21.0" fill="#fafafa" stroke="#3b3b3b" stroke-width="1.1"/><path d="M1042.6 90.6V111.6" stroke="#6e6a66" stroke-width="1"/><path d="M1051.7 90.6V111.6" stroke="#6e6a66" stroke-width="1"/><path d="M1033.5 97.8H1060.5" stroke="#6e6a66" stroke-width="1"/><path d="M1033.5 104.2H1060.5" stroke="#6e6a66" stroke-width="1"/><rect x="1038.200" y="97.600" width="24.600" height="7" fill="#1a6fc4"/><rect x="1044.800" y="98.500" width="8.200" height="5.200" fill="#86bdeb"/><rect x="1054.200" y="98.500" width="7.800" height="5.200" fill="#86bdeb"/><path d="M1033 101.100h11.300" stroke="#fff" stroke-width="1.600"/><path d="M1044 101.100H1031.500M1037.800 94.500 1031.300 101.100l6.500 6.600" fill="none" stroke="#2b88d8" stroke-width="1.300"/></svg>
<span class="t" style="left:1032.00px;top:122.14px;font-size:12px;transform:scaleX(0.9596);color:#242424;">Insert</span>
<svg class="a" style="left:1042.5px;top:142.2px;" width="7" height="4.6" viewBox="0 0 7 4.6"><path d="M1 1 L3.5 3.6 L6 1" fill="none" stroke="#333" stroke-width="1.1" stroke-linecap="round" stroke-linejoin="round"/></svg>
<svg class="a" style="left:1075px;top:84px" width="34" height="30" viewBox="1075 84 34 30"><rect x="1077.5" y="90.6" width="27.0" height="21.0" fill="#fafafa" stroke="#3b3b3b" stroke-width="1.1"/><path d="M1086.4 90.6V111.6" stroke="#6e6a66" stroke-width="1"/><path d="M1095.6 90.6V111.6" stroke="#6e6a66" stroke-width="1"/><path d="M1077.5 97.8H1104.5" stroke="#6e6a66" stroke-width="1"/><path d="M1077.5 104.2H1104.5" stroke="#6e6a66" stroke-width="1"/><rect x="1076" y="98.400" width="32" height="5.300" fill="#fff"/><path d="M1081.200 97.600h13.200l3.800 3.500-3.800 3.500h-13.200z" fill="#86bdeb" stroke="#1a6fc4" stroke-width="1.200"/><path d="M1090.900 97.600v7" stroke="#1a6fc4" stroke-width="1.200"/><path d="M1095 95.800 1106 107.200M1106 95.800 1095 107.200" stroke="#f0474f" stroke-width="1.300"/></svg>
<span class="t" style="left:1074.00px;top:122.14px;font-size:12px;transform:scaleX(0.9513);color:#242424;">Delete</span>
<svg class="a" style="left:1087.0px;top:142.2px;" width="7" height="4.6" viewBox="0 0 7 4.6"><path d="M1 1 L3.5 3.6 L6 1" fill="none" stroke="#333" stroke-width="1.1" stroke-linecap="round" stroke-linejoin="round"/></svg>
<svg class="a" style="left:1119px;top:84px" width="32" height="30" viewBox="1119 84 32 30"><rect x="1121.5" y="90.6" width="27.0" height="21.0" fill="#fafafa" stroke="#3b3b3b" stroke-width="1.1"/><path d="M1128.5 90.6V111.6" stroke="#6e6a66" stroke-width="1"/><path d="M1141.8 90.6V111.6" stroke="#6e6a66" stroke-width="1"/><path d="M1121.5 97.8H1148.5" stroke="#6e6a66" stroke-width="1"/><path d="M1121.5 104.2H1148.5" stroke="#6e6a66" stroke-width="1"/><rect x="1128.500" y="97.800" width="13.300" height="6.400" fill="#86bdeb" stroke="#1a6fc4" stroke-width="1.300"/><path d="M1127.500 86.400h15.400M1127.500 84.800v3.200M1142.900 84.800v3.200" stroke="#2b88d8" stroke-width="1.200"/></svg>
<span class="t" style="left:1116.00px;top:121.14px;font-size:12px;transform:scaleX(0.9946);color:#242424;">Format</span>
<svg class="a" style="left:1130.5px;top:142.2px;" width="7" height="4.6" viewBox="0 0 7 4.6"><path d="M1 1 L3.5 3.6 L6 1" fill="none" stroke="#333" stroke-width="1.1" stroke-linecap="round" stroke-linejoin="round"/></svg>
<span class="t" style="left:1079.50px;top:161.14px;font-size:12px;transform:scaleX(0.8623);color:#333;">Cells</span>
<div class="a" style="left:1164.0px;top:84px;width:1px;height:88px;background:#d9d9d9;"></div>
<svg class="a" style="left:1177px;top:86px" width="16" height="16" viewBox="1177 86 16 16"><path d="M1190.600 89.900V87.900H1179.600L1185.600 94 1179.600 100.100H1190.600V98.100" fill="none" stroke="#333" stroke-width="1.200" stroke-linejoin="round"/></svg>
<span class="t" style="left:1197.00px;top:87.69px;font-size:12.5px;transform:scaleX(0.9530);color:#242424;">AutoSum</span>
<svg class="a" style="left:1263.5px;top:92.7px;" width="7" height="4.6" viewBox="0 0 7 4.6"><path d="M1 1 L3.5 3.6 L6 1" fill="none" stroke="#333" stroke-width="1.1" stroke-linecap="round" stroke-linejoin="round"/></svg>
<svg class="a" style="left:1176px;top:112px" width="18" height="16" viewBox="1176 112 18 16"><rect x="1177.600" y="113.600" width="14.700" height="12.600" fill="#fdfdfd" stroke="#333" stroke-width="1.200"/><path d="M1177.600 116.500h14.700" stroke="#333" stroke-width=".900"/><path d="M1184.900 117.500v7M1181.500 121.200l3.400 3.400 3.400-3.400" fill="none" stroke="#1e88d6" stroke-width="1.300"/></svg>
<span class="t" style="left:1197.00px;top:113.69px;font-size:12.5px;transform:scaleX(0.9394);color:#242424;">Fill</span>
<svg class="a" style="left:1215.3px;top:118.7px;" width="7" height="4.6" viewBox="0 0 7 4.6"><path d="M1 1 L3.5 3.6 L6 1" fill="none" stroke="#333" stroke-width="1.1" stroke-linecap="round" stroke-linejoin="round"/></svg>
<svg class="a" style="left:1175px;top:137px" width="20" height="19" viewBox="1175 137 20 19"><g transform="translate(1184.800 146.250) rotate(-41)"><rect x="-6.700" y="-4" width="13.400" height="8" rx="1.200" fill="#fafafa" stroke="#a33cab" stroke-width="1.300"/><path d="M-6.700 -2.800a1.200 1.200 0 0 1 1.200-1.200h3.700v8h-3.700a1.200 1.200 0 0 1-1.200-1.200z" fill="#c678cc" stroke="#a33cab" stroke-width="1.300"/></g></svg>
<span class="t" style="left:1197.50px;top:139.29px;font-size:12.5px;transform:scaleX(0.9206);color:#242424;">Clear</span>
<svg class="a" style="left:1227.5px;top:144.7px;" width="7" height="4.6" viewBox="0 0 7 4.6"><path d="M1 1 L3.5 3.6 L6 1" fill="none" stroke="#333" stroke-width="1.1" stroke-linecap="round" stroke-linejoin="round"/></svg>
<svg class="a" style="left:1287px;top:86px" width="33" height="30" viewBox="1287 86 33 30"><text x="1288.400" y="99.300" font-size="14.600" font-family="Liberation Sans,sans-serif" fill="#1e88d6" textLength="10.400" lengthAdjust="spacingAndGlyphs">A</text><text x="1288.800" y="113.800" font-size="14.600" font-family="Liberation Sans,sans-serif" fill="#333" textLength="9.600" lengthAdjust="spacingAndGlyphs">Z</text><path d="M1301.600 95h15.400l-5.800 6.800v7.600l-3.800-2v-5.600z" fill="#fafafa" stroke="#333" stroke-width="1.200" stroke-linejoin="round"/></svg>
<span class="t" style="left:1286.00px;top:121.14px;font-size:12px;transform:scaleX(1.0046);color:#242424;">Sort &amp;</span>
<span class="t" style="left:1284.50px;top:137.14px;font-size:12px;transform:scaleX(0.9487);color:#242424;">Filter</span>
<svg class="a" style="left:1313.2px;top:140.8px;" width="6.8" height="4.8" viewBox="0 0 6.8 4.8"><path d="M1 1 L3.4 3.8 L5.8 1" fill="none" stroke="#333" stroke-width="1.1" stroke-linecap="round" stroke-linejoin="round"/></svg>
<svg class="a" style="left:1333px;top:86px;" width="31" height="31" viewBox="0 0 31 31"><circle cx="20" cy="11" r="9.300" fill="none" stroke="#444" stroke-width="1.200"/><path d="M13.500 17.800 1.500 29.500" stroke="#444" stroke-width="1.300" stroke-linecap="round"/></svg>
<span class="t" style="left:1331.00px;top:121.14px;font-size:12px;transform:scaleX(1.0380);color:#242424;">Find &amp;</span>
<span class="t" style="left:1328.40px;top:137.14px;font-size:12px;transform:scaleX(0.9085);color:#242424;">Select</span>
<svg class="a" style="left:1362.2px;top:140.8px;" width="6.8" height="4.8" viewBox="0 0 6.8 4.8"><path d="M1 1 L3.4 3.8 L5.8 1" fill="none" stroke="#333" stroke-width="1.1" stroke-linecap="round" stroke-linejoin="round"/></svg>
<span class="t" style="left:1254.00px;top:161.14px;font-size:12px;transform:scaleX(0.9947);color:#333;">Editing</span>
<div class="a" style="left:1380.0px;top:84px;width:1px;height:88px;background:#d9d9d9;"></div>
<svg class="a" style="left:1405px;top:83px" width="32" height="34" viewBox="1405 83 32 34"><rect x="1407.800" y="87.900" width="19.400" height="26.200" fill="#f2f2f2"/><path d="M1418.300 87.900H1407.800V114.100H1427.200V102" fill="none" stroke="#b4b4b4" stroke-width="1.200"/><g transform="translate(1417.700 101.700) rotate(-45)"><rect x="-2.700" y="-7" width="5.400" height="14" fill="#f4f4f4" stroke="#b4b4b4" stroke-width="1.100"/><rect x="-.700" y="-4.800" width="1.400" height="9.600" fill="#b9b9b9"/><rect x="6.200" y="-7" width="3.300" height="14" fill="#c2c2c2"/><rect x="9.500" y="-7.500" width="5.200" height="15" fill="#f4f4f4" stroke="#b4b4b4" stroke-width="1.100"/><path d="M14.700 -3.800h4.600l-.600 7.600h-4z" fill="#f4f4f4" stroke="#b4b4b4" stroke-width="1.100"/></g></svg>
<span class="t" style="left:1391.00px;top:121.14px;font-size:12px;transform:scaleX(0.9774);color:#b4b4b4;">Sensitivity</span>
<svg class="a" style="left:1414.0px;top:142.2px;" width="7" height="4.6" viewBox="0 0 7 4.6"><path d="M1 1 L3.5 3.6 L6 1" fill="none" stroke="#c6c6c6" stroke-width="1.1" stroke-linecap="round" stroke-linejoin="round"/></svg>
<span class="t" style="left:1392.50px;top:161.14px;font-size:12px;transform:scaleX(0.9349);color:#333;">Sensitivity</span>
<div class="a" style="left:1454.0px;top:84px;width:1px;height:88px;background:#d9d9d9;"></div>
<svg class="a" style="left:1471px;top:86px" width="30" height="30" viewBox="1471 86 30 30"><g fill="none" stroke="#b0b0b0" stroke-width="1.200"><rect x="1472.600" y="87.600" width="26.800" height="26.800"/><rect x="1475.600" y="90.600" width="9" height="9"/><rect x="1487.400" y="90.600" width="9" height="9"/><rect x="1475.600" y="102.400" width="9" height="9"/><rect x="1487.400" y="102.400" width="9" height="9"/></g></svg>
<span class="t" style="left:1465.00px;top:121.14px;font-size:12px;transform:scaleX(1.0322);color:#b4b4b4;">Add-ins</span>
<span class="t" style="left:1466.00px;top:161.14px;font-size:12px;transform:scaleX(0.9708);color:#333;">Add-ins</span>
<div class="a" style="left:1517.0px;top:84px;width:1px;height:88px;background:#d9d9d9;"></div>
<svg class="a" style="left:1531px;top:85px" width="34" height="32" viewBox="1531 85 34 32"><defs>
<linearGradient id="cpb" x1="0" y1="0" x2="0" y2="1"><stop offset="0" stop-color="#1a8fea"/><stop offset=".45" stop-color="#35b37c"/><stop offset=".85" stop-color="#f0c51c"/><stop offset="1" stop-color="#f2a528"/></linearGradient>
<linearGradient id="cpc" x1="0" y1="0" x2="0" y2="1"><stop offset="0" stop-color="#a259ec"/><stop offset=".5" stop-color="#ee4f8d"/><stop offset="1" stop-color="#f99a3e"/></linearGradient>
<linearGradient id="cpa" x1="0" y1="0" x2="1" y2="1"><stop offset="0" stop-color="#1a4fd0"/><stop offset="1" stop-color="#2f7be6"/></linearGradient></defs>
<path d="M1549.500 87.200C1553.500 87.200 1555 88.500 1556 91L1557.600 94.600H1553.600C1553 91.500 1552 88.800 1549.500 87.200Z" fill="url(#cpa)"/>
<path d="M1546.300 114.200C1542.300 114.200 1540.800 112.900 1539.800 110.400L1538.200 106.800H1542.200C1542.800 109.900 1543.800 112.600 1546.300 114.200Z" fill="#e9502b"/>
<path d="M1540 87.200H1550Q1554.400 87.200 1552.500 91.500L1545.800 104.500Q1544.400 107.200 1541.700 107.200H1537.600Q1532.500 107.200 1533.300 102.600L1535.500 91.800Q1536.400 87.500 1540 87.200Z" fill="url(#cpb)"/>
<path d="M1555.800 114.200H1546Q1541.600 114.200 1543.400 110L1550 97Q1551.400 94.300 1554.100 94.300H1558.200Q1563.300 94.300 1562.500 98.900L1560.300 109.600Q1559.400 113.900 1555.800 114.200Z" fill="url(#cpc)"/></svg>
<span class="t" style="left:1528.80px;top:121.14px;font-size:12px;transform:scaleX(1.0226);color:#242424;">Copilot</span>
<div class="a" style="left:1577.0px;top:84px;width:1px;height:88px;background:#d9d9d9;"></div>
<svg class="a" style="left:1614px;top:87px" width="30" height="32" viewBox="1614 87 30 32"><path d="M1634.6000000000001 101.9V94.200L1629.8000000000002 89.400H1618.6000000000001a2.200 2.200 0 0 0-2.200 2.200V109.500a2.200 2.200 0 0 0 2.200 2.200H1625.4" fill="none" stroke="#2a62d8" stroke-width="1.200"/><path d="M1625.1000000000001 94.200c.600 2.500-.600 5.500-2 7.600-1 1.500-2 2.500-3 2.800M1624.6000000000001 100.300c1.500 1 3.500 1.500 6.300 1.400" fill="none" stroke="#2a62d8" stroke-width="1.100" stroke-linecap="round"/><g fill="none" stroke="#2a62d8" stroke-width="1.300"><rect x="-5" y="-2.700" width="10" height="5.400" rx="2.700" transform="translate(1637.300 106.200) rotate(-45)"/><rect x="-5" y="-2.700" width="10" height="5.400" rx="2.700" transform="translate(1631.200 112.700) rotate(-45)"/></g></svg>
<span class="t" style="left:1596.00px;top:121.14px;font-size:12px;transform:scaleX(0.9155);color:#242424;">Create PDF</span>
<span class="t" style="left:1588.00px;top:137.14px;font-size:12px;transform:scaleX(0.9646);color:#242424;">and Share link</span>
<svg class="a" style="left:1705px;top:87px" width="30" height="32" viewBox="1705 87 30 32"><path d="M1725.4 103.5V94.200L1720.6000000000001 89.400H1709.4a2.200 2.200 0 0 0-2.200 2.200V109.500a2.200 2.200 0 0 0 2.200 2.200H1715.6" fill="none" stroke="#2a62d8" stroke-width="1.200"/><path d="M1715.9 94.200c.600 2.500-.600 5.500-2 7.600-1 1.500-2 2.500-3 2.800M1715.4 100.300c1.500 1 3.500 1.500 6.300 1.400" fill="none" stroke="#2a62d8" stroke-width="1.100" stroke-linecap="round"/><rect x="1718.400" y="107" width="13" height="8.700" rx="1.300" fill="#fff" stroke="#2a62d8" stroke-width="1.300"/><path d="M1719 107.800l5.900 4.600 5.900-4.600" fill="none" stroke="#2a62d8" stroke-width="1.200"/></svg>
<span class="t" style="left:1675.50px;top:121.14px;font-size:12px;transform:scaleX(0.9226);color:#242424;">Create PDF and</span>
<span class="t" style="left:1669.00px;top:137.14px;font-size:12px;transform:scaleX(0.9750);color:#242424;">Share via Outlook</span>
<span class="t" style="left:1637.00px;top:161.14px;font-size:12px;transform:scaleX(0.9755);color:#333;">Adobe Acrobat</span>
<div class="a" style="left:1772.0px;top:84px;width:1px;height:88px;background:#d9d9d9;"></div>
<div class="a" style="left:1804.8px;top:84.8px;width:32px;height:32px;background:#b2b2b2;border-radius:50%;"></div>
<svg class="a" style="left:1804.8px;top:84.8px;" width="32" height="32" viewBox="0 0 32 32"><g fill="none" stroke="#fff" stroke-width="2.300"><circle cx="9.600" cy="16.200" r="3.500"/><path d="M13.600 11.800v12.400"/><circle cx="22.200" cy="16.200" r="3.500"/><path d="M18.200 8.300v12.400"/></g></svg>
<span class="t" style="left:1789.00px;top:121.14px;font-size:12px;transform:scaleX(0.9404);color:#b4b4b4;">Spreadsheet</span>
<span class="t" style="left:1809.00px;top:137.14px;font-size:12px;transform:scaleX(0.9296);color:#b4b4b4;">Sync</span>
<span class="t" style="left:1776.00px;top:161.14px;font-size:12px;transform:scaleX(0.9178);color:#333;">Spreadsheet Sync</span>
<div class="a" style="left:1869.0px;top:84px;width:1px;height:88px;background:#d9d9d9;"></div>
<svg class="a" style="left:1892.0px;top:160.6px;" width="11" height="6.8" viewBox="0 0 11 6.8"><path d="M1 1 L5.5 5.8 L10 1" fill="none" stroke="#333" stroke-width="1.2" stroke-linecap="round" stroke-linejoin="round"/></svg>
<div class="a" style="left:0;top:247px;width:1898px;height:731px;overflow:hidden;background:#f0f0f0">
<div class="a" style="left:26px;top:19px;width:1872px;height:712px;background:#fff;"></div>
<div class="a" style="left:26px;top:19px;width:1872px;height:712px;"><div class="gl"><i style="left:211px"></i><i style="left:300px"></i><i style="left:389px"></i><i style="left:478px"></i><i style="left:567px"></i><i style="left:656px"></i><i style="left:745px"></i><i style="left:834px"></i><i style="left:923px"></i><i style="left:987px"></i><i style="left:1051px"></i><i style="left:1115px"></i><i style="left:1179px"></i><i style="left:1243px"></i><i style="left:1307px"></i><i style="left:1371px"></i><i style="left:1435px"></i><i style="left:1499px"></i><i style="left:1563px"></i><i style="left:1627px"></i><i style="left:1691px"></i><i style="left:1755px"></i><i style="left:1819px"></i><b style="top:20px"></b><b style="top:40px"></b><b style="top:60px"></b><b style="top:80px"></b><b style="top:100px"></b><b style="top:120px"></b><b style="top:140px"></b><b style="top:160px"></b><b style="top:180px"></b><b style="top:200px"></b><b style="top:220px"></b><b style="top:240px"></b><b style="top:260px"></b><b style="top:280px"></b><b style="top:300px"></b><b style="top:320px"></b><b style="top:340px"></b><b style="top:360px"></b><b style="top:380px"></b><b style="top:400px"></b><b style="top:420px"></b><b style="top:440px"></b><b style="top:460px"></b><b style="top:480px"></b><b style="top:500px"></b><b style="top:520px"></b><b style="top:540px"></b><b style="top:560px"></b><b style="top:580px"></b><b style="top:600px"></b><b style="top:620px"></b><b style="top:640px"></b><b style="top:660px"></b><b style="top:680px"></b><b style="top:700px"></b></div></div>
<div class="a" style="left:26px;top:79px;width:212px;height:401px;background:#b4c0df;"></div>
<div class="a" style="left:237px;top:79px;width:713px;height:401px;background:#dae0f0;"></div>
<div class="a" style="left:237px;top:79px;width:1px;height:401px;background:#fff;"></div>
<div class="a" style="left:326px;top:79px;width:1px;height:401px;background:#fff;"></div>
<div class="a" style="left:415px;top:79px;width:1px;height:401px;background:#fff;"></div>
<div class="a" style="left:504px;top:79px;width:1px;height:401px;background:#fff;"></div>
<div class="a" style="left:593px;top:79px;width:1px;height:401px;background:#fff;"></div>
<div class="a" style="left:682px;top:79px;width:1px;height:401px;background:#fff;"></div>
<div class="a" style="left:771px;top:79px;width:1px;height:401px;background:#fff;"></div>
<div class="a" style="left:860px;top:79px;width:1px;height:401px;background:#fff;"></div>
<div class="a" style="left:26px;top:119px;width:924px;height:1px;background:#fff;"></div>
<div class="a" style="left:26px;top:519px;width:212px;height:81px;background:#b4c0df;"></div>
<div class="a" style="left:237px;top:519px;width:357px;height:81px;background:#dae0f0;"></div>
<div class="a" style="left:237px;top:519px;width:1px;height:81px;background:#fff;"></div>
<div class="a" style="left:326px;top:519px;width:1px;height:81px;background:#fff;"></div>
<div class="a" style="left:415px;top:519px;width:1px;height:81px;background:#fff;"></div>
<div class="a" style="left:504px;top:519px;width:1px;height:81px;background:#fff;"></div>
<div class="a" style="left:26px;top:559px;width:568px;height:1px;background:#fff;"></div>
<div class="a" style="left:26px;top:639px;width:212px;height:121px;background:#b4c0df;"></div>
<div class="a" style="left:237px;top:639px;width:713px;height:121px;background:#dae0f0;"></div>
<div class="a" style="left:237px;top:639px;width:1px;height:121px;background:#fff;"></div>
<div class="a" style="left:326px;top:639px;width:1px;height:121px;background:#fff;"></div>
<div class="a" style="left:415px;top:639px;width:1px;height:121px;background:#fff;"></div>
<div class="a" style="left:504px;top:639px;width:1px;height:121px;background:#fff;"></div>
<div class="a" style="left:593px;top:639px;width:1px;height:121px;background:#fff;"></div>
<div class="a" style="left:682px;top:639px;width:1px;height:121px;background:#fff;"></div>
<div class="a" style="left:771px;top:639px;width:1px;height:121px;background:#fff;"></div>
<div class="a" style="left:860px;top:639px;width:1px;height:121px;background:#fff;"></div>
<div class="a" style="left:26px;top:679px;width:924px;height:1px;background:#fff;"></div>
<span class="t b" style="left:28.30px;top:21.42px;font-size:15px;transform:scaleX(0.9171);color:#000;">Summary</span>
<span class="t b" style="left:28.30px;top:62.33px;font-size:14px;transform:scaleX(0.9281);color:#000;">Bill Review</span>
<span class="t b" style="left:28.30px;top:502.33px;font-size:14px;transform:scaleX(0.9368);color:#000;">Penn National</span>
<span class="t b" style="left:28.30px;top:622.33px;font-size:14px;transform:scaleX(0.8841);color:#000;">CEP</span>
<span class="t b" style="left:28.30px;top:82.33px;font-size:14px;transform:scaleX(0.9318);color:#35478c;">Count of Bill ID</span>
<span class="t b" style="left:245.00px;top:82.33px;font-size:14px;transform:scaleX(0.8714);color:#35478c;">Aged</span>
<span class="t b" style="left:28.30px;top:102.33px;font-size:14px;transform:scaleX(0.8991);color:#35478c;">CLIENT</span>
<span class="t b" style="left:245.00px;top:102.33px;font-size:14px;transform:scaleX(0.8919);color:#35478c;">30+ Days</span>
<span class="t b" style="left:334.00px;top:102.33px;font-size:14px;transform:scaleX(0.9116);color:#35478c;">24-29 Days</span>
<span class="t b" style="left:423.00px;top:102.33px;font-size:14px;transform:scaleX(0.9116);color:#35478c;">15-23 Days</span>
<span class="t b" style="left:512.00px;top:102.33px;font-size:14px;transform:scaleX(0.9061);color:#35478c;">10-14 Days</span>
<span class="t b" style="left:601.00px;top:102.33px;font-size:14px;transform:scaleX(0.9116);color:#35478c;">05-09 Days</span>
<span class="t b" style="left:690.00px;top:102.33px;font-size:14px;transform:scaleX(0.9116);color:#35478c;">03-04 Days</span>
<span class="t b" style="left:779.00px;top:102.33px;font-size:14px;transform:scaleX(0.9202);color:#35478c;">0-2 Days</span>
<span class="t b" style="left:868.00px;top:102.33px;font-size:14px;transform:scaleX(0.9288);color:#35478c;">Grand Total</span>
<span class="t b" style="left:28.30px;top:122.33px;font-size:14px;transform:scaleX(0.8816);color:#35478c;">AMICA</span>
<span class="t" style="left:489.79px;top:122.33px;font-size:14px;transform:scaleX(0.8620);color:#35478c;">1</span>
<span class="t" style="left:661.08px;top:122.33px;font-size:14px;transform:scaleX(0.8620);color:#35478c;">96</span>
<span class="t" style="left:756.79px;top:122.33px;font-size:14px;transform:scaleX(0.8620);color:#35478c;">6</span>
<span class="t" style="left:921.36px;top:122.33px;font-size:14px;transform:scaleX(0.8620);color:#35478c;">103</span>
<span class="t b" style="left:28.30px;top:142.33px;font-size:14px;transform:scaleX(0.8838);color:#35478c;">CITY OF DETROIT PIP</span>
<span class="t" style="left:667.79px;top:142.33px;font-size:14px;transform:scaleX(0.8620);color:#35478c;">7</span>
<span class="t" style="left:756.79px;top:142.33px;font-size:14px;transform:scaleX(0.8620);color:#35478c;">1</span>
<span class="t" style="left:845.79px;top:142.33px;font-size:14px;transform:scaleX(0.8620);color:#35478c;">3</span>
<span class="t" style="left:928.97px;top:142.33px;font-size:14px;transform:scaleX(0.8620);color:#35478c;">11</span>
<span class="t b" style="left:28.30px;top:162.33px;font-size:14px;transform:scaleX(0.8928);color:#35478c;">CITY OF DETROIT WC</span>
<span class="t" style="left:489.79px;top:162.33px;font-size:14px;transform:scaleX(0.8620);color:#35478c;">4</span>
<span class="t" style="left:565.36px;top:162.33px;font-size:14px;transform:scaleX(0.8620);color:#35478c;">102</span>
<span class="t" style="left:654.36px;top:162.33px;font-size:14px;transform:scaleX(0.8620);color:#35478c;">245</span>
<span class="t" style="left:750.08px;top:162.33px;font-size:14px;transform:scaleX(0.8620);color:#35478c;">51</span>
<span class="t" style="left:839.08px;top:162.33px;font-size:14px;transform:scaleX(0.8620);color:#35478c;">84</span>
<span class="t" style="left:921.36px;top:162.33px;font-size:14px;transform:scaleX(0.8620);color:#35478c;">486</span>
<span class="t b" style="left:28.30px;top:182.33px;font-size:14px;transform:scaleX(0.8846);color:#35478c;">CLEARCOVER</span>
<span class="t" style="left:572.08px;top:182.33px;font-size:14px;transform:scaleX(0.8620);color:#35478c;">17</span>
<span class="t" style="left:928.08px;top:182.33px;font-size:14px;transform:scaleX(0.8620);color:#35478c;">17</span>
<span class="t b" style="left:28.30px;top:202.33px;font-size:14px;transform:scaleX(0.9151);color:#35478c;">COMPONE</span>
<span class="t" style="left:311.79px;top:202.33px;font-size:14px;transform:scaleX(0.8620);color:#35478c;">1</span>
<span class="t" style="left:483.08px;top:202.33px;font-size:14px;transform:scaleX(0.8620);color:#35478c;">15</span>
<span class="t" style="left:565.36px;top:202.33px;font-size:14px;transform:scaleX(0.8620);color:#35478c;">235</span>
<span class="t" style="left:654.36px;top:202.33px;font-size:14px;transform:scaleX(0.8620);color:#35478c;">422</span>
<span class="t" style="left:750.08px;top:202.33px;font-size:14px;transform:scaleX(0.8620);color:#35478c;">99</span>
<span class="t" style="left:839.08px;top:202.33px;font-size:14px;transform:scaleX(0.8620);color:#35478c;">87</span>
<span class="t" style="left:921.36px;top:202.33px;font-size:14px;transform:scaleX(0.8620);color:#35478c;">859</span>
<span class="t b" style="left:28.30px;top:222.33px;font-size:14px;transform:scaleX(0.8968);color:#35478c;">FOUNDERS</span>
<span class="t" style="left:667.79px;top:222.33px;font-size:14px;transform:scaleX(0.8620);color:#35478c;">2</span>
<span class="t" style="left:845.79px;top:222.33px;font-size:14px;transform:scaleX(0.8620);color:#35478c;">1</span>
<span class="t" style="left:934.79px;top:222.33px;font-size:14px;transform:scaleX(0.8620);color:#35478c;">3</span>
<span class="t b" style="left:28.30px;top:242.33px;font-size:14px;transform:scaleX(0.8853);color:#35478c;">FREMONT PIP</span>
<span class="t" style="left:400.79px;top:242.33px;font-size:14px;transform:scaleX(0.8620);color:#35478c;">1</span>
<span class="t" style="left:489.79px;top:242.33px;font-size:14px;transform:scaleX(0.8620);color:#35478c;">1</span>
<span class="t" style="left:578.79px;top:242.33px;font-size:14px;transform:scaleX(0.8620);color:#35478c;">3</span>
<span class="t" style="left:661.08px;top:242.33px;font-size:14px;transform:scaleX(0.8620);color:#35478c;">58</span>
<span class="t" style="left:750.08px;top:242.33px;font-size:14px;transform:scaleX(0.8620);color:#35478c;">85</span>
<span class="t" style="left:839.08px;top:242.33px;font-size:14px;transform:scaleX(0.8620);color:#35478c;">90</span>
<span class="t" style="left:921.36px;top:242.33px;font-size:14px;transform:scaleX(0.8620);color:#35478c;">238</span>
<span class="t b" style="left:28.30px;top:262.33px;font-size:14px;transform:scaleX(0.8991);color:#35478c;">FREMONT WC</span>
<span class="t" style="left:578.79px;top:262.33px;font-size:14px;transform:scaleX(0.8620);color:#35478c;">9</span>
<span class="t" style="left:661.08px;top:262.33px;font-size:14px;transform:scaleX(0.8620);color:#35478c;">34</span>
<span class="t" style="left:750.08px;top:262.33px;font-size:14px;transform:scaleX(0.8620);color:#35478c;">17</span>
<span class="t" style="left:839.08px;top:262.33px;font-size:14px;transform:scaleX(0.8620);color:#35478c;">21</span>
<span class="t" style="left:928.08px;top:262.33px;font-size:14px;transform:scaleX(0.8620);color:#35478c;">81</span>
<span class="t b" style="left:28.30px;top:282.33px;font-size:14px;transform:scaleX(0.8610);color:#35478c;">MANAGEABILITY</span>
<span class="t" style="left:661.08px;top:282.33px;font-size:14px;transform:scaleX(0.8620);color:#35478c;">26</span>
<span class="t" style="left:928.08px;top:282.33px;font-size:14px;transform:scaleX(0.8620);color:#35478c;">26</span>
<span class="t b" style="left:28.30px;top:302.33px;font-size:14px;transform:scaleX(0.8986);color:#35478c;">MICHIGAN STATE UNIVERSITY</span>
<span class="t" style="left:489.79px;top:302.33px;font-size:14px;transform:scaleX(0.8620);color:#35478c;">1</span>
<span class="t" style="left:578.79px;top:302.33px;font-size:14px;transform:scaleX(0.8620);color:#35478c;">1</span>
<span class="t" style="left:667.79px;top:302.33px;font-size:14px;transform:scaleX(0.8620);color:#35478c;">4</span>
<span class="t" style="left:750.08px;top:302.33px;font-size:14px;transform:scaleX(0.8620);color:#35478c;">24</span>
<span class="t" style="left:845.79px;top:302.33px;font-size:14px;transform:scaleX(0.8620);color:#35478c;">3</span>
<span class="t" style="left:928.08px;top:302.33px;font-size:14px;transform:scaleX(0.8620);color:#35478c;">33</span>
<span class="t b" style="left:28.30px;top:322.33px;font-size:14px;transform:scaleX(0.9037);color:#35478c;">MPCGA-PIP</span>
<span class="t" style="left:572.97px;top:322.33px;font-size:14px;transform:scaleX(0.8620);color:#35478c;">11</span>
<span class="t" style="left:661.08px;top:322.33px;font-size:14px;transform:scaleX(0.8620);color:#35478c;">22</span>
<span class="t" style="left:756.79px;top:322.33px;font-size:14px;transform:scaleX(0.8620);color:#35478c;">1</span>
<span class="t" style="left:839.08px;top:322.33px;font-size:14px;transform:scaleX(0.8620);color:#35478c;">14</span>
<span class="t" style="left:928.08px;top:322.33px;font-size:14px;transform:scaleX(0.8620);color:#35478c;">48</span>
<span class="t b" style="left:28.30px;top:342.33px;font-size:14px;transform:scaleX(0.9201);color:#35478c;">MPCGA-WC</span>
<span class="t" style="left:578.79px;top:342.33px;font-size:14px;transform:scaleX(0.8620);color:#35478c;">2</span>
<span class="t" style="left:667.79px;top:342.33px;font-size:14px;transform:scaleX(0.8620);color:#35478c;">3</span>
<span class="t" style="left:845.79px;top:342.33px;font-size:14px;transform:scaleX(0.8620);color:#35478c;">2</span>
<span class="t" style="left:934.79px;top:342.33px;font-size:14px;transform:scaleX(0.8620);color:#35478c;">7</span>
<span class="t b" style="left:28.30px;top:362.33px;font-size:14px;transform:scaleX(0.9110);color:#35478c;">PROMEDICA</span>
<span class="t" style="left:667.79px;top:362.33px;font-size:14px;transform:scaleX(0.8620);color:#35478c;">1</span>
<span class="t" style="left:934.79px;top:362.33px;font-size:14px;transform:scaleX(0.8620);color:#35478c;">1</span>
<span class="t b" style="left:28.30px;top:382.33px;font-size:14px;transform:scaleX(0.8779);color:#35478c;">SCA</span>
<span class="t" style="left:489.79px;top:382.33px;font-size:14px;transform:scaleX(0.8620);color:#35478c;">5</span>
<span class="t" style="left:572.08px;top:382.33px;font-size:14px;transform:scaleX(0.8620);color:#35478c;">12</span>
<span class="t" style="left:661.08px;top:382.33px;font-size:14px;transform:scaleX(0.8620);color:#35478c;">44</span>
<span class="t" style="left:750.08px;top:382.33px;font-size:14px;transform:scaleX(0.8620);color:#35478c;">14</span>
<span class="t" style="left:839.08px;top:382.33px;font-size:14px;transform:scaleX(0.8620);color:#35478c;">17</span>
<span class="t" style="left:928.08px;top:382.33px;font-size:14px;transform:scaleX(0.8620);color:#35478c;">92</span>
<span class="t b" style="left:28.30px;top:402.33px;font-size:14px;transform:scaleX(0.8832);color:#35478c;">TRANSIT GENERAL INSURANCE</span>
<span class="t" style="left:667.79px;top:402.33px;font-size:14px;transform:scaleX(0.8620);color:#35478c;">3</span>
<span class="t" style="left:934.79px;top:402.33px;font-size:14px;transform:scaleX(0.8620);color:#35478c;">3</span>
<span class="t b" style="left:28.30px;top:422.33px;font-size:14px;transform:scaleX(0.9034);color:#35478c;">UNIVERSITY OF MICHIGAN</span>
<span class="t" style="left:489.79px;top:422.33px;font-size:14px;transform:scaleX(0.8620);color:#35478c;">2</span>
<span class="t" style="left:572.08px;top:422.33px;font-size:14px;transform:scaleX(0.8620);color:#35478c;">80</span>
<span class="t" style="left:661.08px;top:422.33px;font-size:14px;transform:scaleX(0.8620);color:#35478c;">26</span>
<span class="t" style="left:839.08px;top:422.33px;font-size:14px;transform:scaleX(0.8620);color:#35478c;">93</span>
<span class="t" style="left:921.36px;top:422.33px;font-size:14px;transform:scaleX(0.8620);color:#35478c;">201</span>
<span class="t b" style="left:28.30px;top:442.33px;font-size:14px;transform:scaleX(0.8911);color:#35478c;">WAYNE STATE UNIVERSITY</span>
<span class="t" style="left:667.79px;top:442.33px;font-size:14px;transform:scaleX(0.8620);color:#35478c;">3</span>
<span class="t" style="left:756.79px;top:442.33px;font-size:14px;transform:scaleX(0.8620);color:#35478c;">1</span>
<span class="t" style="left:934.79px;top:442.33px;font-size:14px;transform:scaleX(0.8620);color:#35478c;">4</span>
<span class="t b" style="left:28.30px;top:462.33px;font-size:14px;transform:scaleX(0.9249);color:#35478c;">Grand Total</span>
<span class="t b" style="left:311.45px;top:462.33px;font-size:14px;transform:scaleX(0.9050);color:#35478c;">1</span>
<span class="t b" style="left:400.45px;top:462.33px;font-size:14px;transform:scaleX(0.9050);color:#35478c;">1</span>
<span class="t b" style="left:482.41px;top:462.33px;font-size:14px;transform:scaleX(0.9050);color:#35478c;">29</span>
<span class="t b" style="left:564.36px;top:462.33px;font-size:14px;transform:scaleX(0.9050);color:#35478c;">472</span>
<span class="t b" style="left:653.36px;top:462.33px;font-size:14px;transform:scaleX(0.9050);color:#35478c;">996</span>
<span class="t b" style="left:742.36px;top:462.33px;font-size:14px;transform:scaleX(0.9050);color:#35478c;">299</span>
<span class="t b" style="left:831.36px;top:462.33px;font-size:14px;transform:scaleX(0.9050);color:#35478c;">415</span>
<span class="t b" style="left:909.79px;top:462.33px;font-size:14px;transform:scaleX(0.9050);color:#35478c;">2,213</span>
<span class="t b" style="left:28.30px;top:522.33px;font-size:14px;transform:scaleX(0.9318);color:#35478c;">Count of Bill ID</span>
<span class="t b" style="left:245.00px;top:522.33px;font-size:14px;transform:scaleX(0.8714);color:#35478c;">Aged</span>
<span class="t b" style="left:28.30px;top:542.33px;font-size:14px;transform:scaleX(0.8880);color:#35478c;">CLIENT NAME</span>
<span class="t b" style="left:245.00px;top:542.33px;font-size:14px;transform:scaleX(0.9061);color:#35478c;">10-14 Days</span>
<span class="t b" style="left:334.00px;top:542.33px;font-size:14px;transform:scaleX(0.9116);color:#35478c;">05-09 Days</span>
<span class="t b" style="left:423.00px;top:542.33px;font-size:14px;transform:scaleX(0.9202);color:#35478c;">0-2 Days</span>
<span class="t b" style="left:512.00px;top:542.33px;font-size:14px;transform:scaleX(0.9288);color:#35478c;">Grand Total</span>
<span class="t b" style="left:28.30px;top:562.33px;font-size:14px;transform:scaleX(0.8981);color:#35478c;">PENN NATIONAL</span>
<span class="t" style="left:305.97px;top:562.33px;font-size:14px;transform:scaleX(0.8620);color:#35478c;">11</span>
<span class="t b" style="left:305.11px;top:582.33px;font-size:14px;transform:scaleX(0.9050);color:#35478c;">11</span>
<span class="t" style="left:394.08px;top:562.33px;font-size:14px;transform:scaleX(0.8620);color:#35478c;">12</span>
<span class="t b" style="left:393.41px;top:582.33px;font-size:14px;transform:scaleX(0.9050);color:#35478c;">12</span>
<span class="t" style="left:489.79px;top:562.33px;font-size:14px;transform:scaleX(0.8620);color:#35478c;">2</span>
<span class="t b" style="left:489.45px;top:582.33px;font-size:14px;transform:scaleX(0.9050);color:#35478c;">2</span>
<span class="t" style="left:572.08px;top:562.33px;font-size:14px;transform:scaleX(0.8620);color:#35478c;">25</span>
<span class="t b" style="left:571.41px;top:582.33px;font-size:14px;transform:scaleX(0.9050);color:#35478c;">25</span>
<span class="t b" style="left:28.30px;top:582.33px;font-size:14px;transform:scaleX(0.9249);color:#35478c;">Grand Total</span>
<span class="t b" style="left:28.30px;top:642.33px;font-size:14px;transform:scaleX(0.9318);color:#35478c;">Count of Bill ID</span>
<span class="t b" style="left:245.00px;top:642.33px;font-size:14px;transform:scaleX(0.8714);color:#35478c;">Aged</span>
<span class="t b" style="left:28.30px;top:662.33px;font-size:14px;transform:scaleX(0.9106);color:#35478c;">Pend Group</span>
<span class="t b" style="left:245.00px;top:662.33px;font-size:14px;transform:scaleX(0.8919);color:#35478c;">30+ Days</span>
<span class="t b" style="left:334.00px;top:662.33px;font-size:14px;transform:scaleX(0.9116);color:#35478c;">24-29 Days</span>
<span class="t b" style="left:423.00px;top:662.33px;font-size:14px;transform:scaleX(0.9116);color:#35478c;">15-23 Days</span>
<span class="t b" style="left:512.00px;top:662.33px;font-size:14px;transform:scaleX(0.9061);color:#35478c;">10-14 Days</span>
<span class="t b" style="left:601.00px;top:662.33px;font-size:14px;transform:scaleX(0.9116);color:#35478c;">05-09 Days</span>
<span class="t b" style="left:690.00px;top:662.33px;font-size:14px;transform:scaleX(0.9116);color:#35478c;">03-04 Days</span>
<span class="t b" style="left:779.00px;top:662.33px;font-size:14px;transform:scaleX(0.9202);color:#35478c;">0-2 Days</span>
<span class="t b" style="left:868.00px;top:662.33px;font-size:14px;transform:scaleX(0.9288);color:#35478c;">Grand Total</span>
<span class="t b" style="left:28.30px;top:682.33px;font-size:14px;transform:scaleX(0.8843);color:#35478c;">#CEP_CLEARCOV</span>
<span class="t" style="left:311.79px;top:682.33px;font-size:14px;transform:scaleX(0.8620);color:#35478c;">4</span>
<span class="t" style="left:400.79px;top:682.33px;font-size:14px;transform:scaleX(0.8620);color:#35478c;">1</span>
<span class="t" style="left:489.79px;top:682.33px;font-size:14px;transform:scaleX(0.8620);color:#35478c;">6</span>
<span class="t" style="left:578.79px;top:682.33px;font-size:14px;transform:scaleX(0.8620);color:#35478c;">1</span>
<span class="t" style="left:928.08px;top:682.33px;font-size:14px;transform:scaleX(0.8620);color:#35478c;">12</span>
<span class="t b" style="left:28.30px;top:702.33px;font-size:14px;transform:scaleX(0.8993);color:#35478c;">#CEP_COMPONE</span>
<span class="t" style="left:489.79px;top:702.33px;font-size:14px;transform:scaleX(0.8620);color:#35478c;">7</span>
<span class="t" style="left:578.79px;top:702.33px;font-size:14px;transform:scaleX(0.8620);color:#35478c;">6</span>
<span class="t" style="left:655.26px;top:702.33px;font-size:14px;transform:scaleX(0.8620);color:#35478c;">119</span>
<span class="t" style="left:750.08px;top:702.33px;font-size:14px;transform:scaleX(0.8620);color:#35478c;">81</span>
<span class="t" style="left:832.36px;top:702.33px;font-size:14px;transform:scaleX(0.8620);color:#35478c;">100</span>
<span class="t" style="left:921.36px;top:702.33px;font-size:14px;transform:scaleX(0.8620);color:#35478c;">313</span>
<span class="t b" style="left:28.30px;top:722.33px;font-size:14px;transform:scaleX(0.8792);color:#35478c;">#CEP_FREMONT1</span>
<span class="t" style="left:661.08px;top:722.33px;font-size:14px;transform:scaleX(0.8620);color:#35478c;">41</span>
<span class="t" style="left:750.08px;top:722.33px;font-size:14px;transform:scaleX(0.8620);color:#35478c;">33</span>
<span class="t" style="left:832.36px;top:722.33px;font-size:14px;transform:scaleX(0.8620);color:#35478c;">107</span>
<span class="t" style="left:921.36px;top:722.33px;font-size:14px;transform:scaleX(0.8620);color:#35478c;">181</span>
<div class="a" style="left:309px;top:81px;width:17px;height:17px;background:linear-gradient(#fff,#f4f4f4);border:1px solid #b4b4b4;border-radius:1px;"><svg width="15" height="15" viewBox="1 1 15 15" style="display:block"><path d="M4 10.300h5l-2.500 2.600z" fill="#555"/><path d="M11.600 4.500v7.900M9.800 10.400l1.800 2 1.800-2" fill="none" stroke="#333" stroke-width="1.100"/></svg></div>
<div class="a" style="left:309px;top:521px;width:17px;height:17px;background:linear-gradient(#fff,#f4f4f4);border:1px solid #b4b4b4;border-radius:1px;"><svg width="15" height="15" viewBox="1 1 15 15" style="display:block"><path d="M4 10.300h5l-2.500 2.600z" fill="#555"/><path d="M11.600 4.500v7.900M9.800 10.400l1.800 2 1.800-2" fill="none" stroke="#333" stroke-width="1.100"/></svg></div>
<div class="a" style="left:309px;top:641px;width:17px;height:17px;background:linear-gradient(#fff,#f4f4f4);border:1px solid #b4b4b4;border-radius:1px;"><svg width="15" height="15" viewBox="1 1 15 15" style="display:block"><path d="M4 10.300h5l-2.500 2.600z" fill="#555"/><path d="M11.600 4.500v7.900M9.800 10.400l1.800 2 1.800-2" fill="none" stroke="#333" stroke-width="1.100"/></svg></div>
<div class="a" style="left:220px;top:101.5px;width:16.5px;height:16.5px;background:linear-gradient(#fff,#f4f4f4);border:1px solid #b4b4b4;border-radius:1px;"><svg width="14.5" height="14.5" viewBox="1 1 14.5 14.5" style="display:block"><path d="M4.500 6.500h7l-3.500 4z" fill="#555"/></svg></div>
<div class="a" style="left:220px;top:541.5px;width:16.5px;height:16.5px;background:linear-gradient(#fff,#f4f4f4);border:1px solid #b4b4b4;border-radius:1px;"><svg width="14.5" height="14.5" viewBox="1 1 14.5 14.5" style="display:block"><path d="M2.800 9.700h4.700l-2.350 2.600z" fill="#555"/><path d="M5.500 3.500h9v1.700l-3.100 2.800v3.500h-2.400V8L5.500 5.200z" fill="#444"/></svg></div>
<div class="a" style="left:220px;top:661.5px;width:16.5px;height:16.5px;background:linear-gradient(#fff,#f4f4f4);border:1px solid #b4b4b4;border-radius:1px;"><svg width="14.5" height="14.5" viewBox="1 1 14.5 14.5" style="display:block"><path d="M4.500 6.500h7l-3.500 4z" fill="#555"/></svg></div>
<div class="a" style="left:26px;top:119px;width:835px;height:2px;background:repeating-linear-gradient(90deg,#13743b 0,#13743b 7px,#fff 7px,#fff 9px);"></div>
<div class="a" style="left:26px;top:458px;width:835px;height:2px;background:repeating-linear-gradient(90deg,#13743b 0,#13743b 7px,#fff 7px,#fff 9px);"></div>
<div class="a" style="left:26px;top:119px;width:1px;height:341px;background:repeating-linear-gradient(180deg,#13743b 0,#13743b 7px,#fff 7px,#fff 9px);"></div>
<div class="a" style="left:859px;top:119px;width:2px;height:341px;background:repeating-linear-gradient(180deg,#13743b 0,#13743b 7px,#fff 7px,#fff 9px);"></div>
<div class="a" style="left:236px;top:558px;width:92px;height:23px;border:2px solid #13733c;box-shadow:inset 0 0 0 1px #fff;"></div>
<div class="a" style="left:323px;top:576px;width:6.5px;height:6.5px;background:#13733c;border:1px solid #fff;border-right:0;border-bottom:0;box-sizing:border-box;"></div>
<div class="a" style="left:0px;top:0px;width:1898px;height:19px;background:#f0f0f0;"></div>
<div class="a" style="left:237px;top:2px;width:90px;height:16px;background:#e2e2e2;"></div>
<div class="a" style="left:237px;top:3px;width:1px;height:15px;background:#d4d4d4;"></div>
<div class="a" style="left:326px;top:3px;width:1px;height:15px;background:#d4d4d4;"></div>
<div class="a" style="left:415px;top:3px;width:1px;height:15px;background:#d4d4d4;"></div>
<div class="a" style="left:504px;top:3px;width:1px;height:15px;background:#d4d4d4;"></div>
<div class="a" style="left:593px;top:3px;width:1px;height:15px;background:#d4d4d4;"></div>
<div class="a" style="left:682px;top:3px;width:1px;height:15px;background:#d4d4d4;"></div>
<div class="a" style="left:771px;top:3px;width:1px;height:15px;background:#d4d4d4;"></div>
<div class="a" style="left:860px;top:3px;width:1px;height:15px;background:#d4d4d4;"></div>
<div class="a" style="left:949px;top:3px;width:1px;height:15px;background:#d4d4d4;"></div>
<div class="a" style="left:1013px;top:3px;width:1px;height:15px;background:#d4d4d4;"></div>
<div class="a" style="left:1077px;top:3px;width:1px;height:15px;background:#d4d4d4;"></div>
<div class="a" style="left:1141px;top:3px;width:1px;height:15px;background:#d4d4d4;"></div>
<div class="a" style="left:1205px;top:3px;width:1px;height:15px;background:#d4d4d4;"></div>
<div class="a" style="left:1269px;top:3px;width:1px;height:15px;background:#d4d4d4;"></div>
<div class="a" style="left:1333px;top:3px;width:1px;height:15px;background:#d4d4d4;"></div>
<div class="a" style="left:1397px;top:3px;width:1px;height:15px;background:#d4d4d4;"></div>
<div class="a" style="left:1461px;top:3px;width:1px;height:15px;background:#d4d4d4;"></div>
<div class="a" style="left:1525px;top:3px;width:1px;height:15px;background:#d4d4d4;"></div>
<div class="a" style="left:1589px;top:3px;width:1px;height:15px;background:#d4d4d4;"></div>
<div class="a" style="left:1653px;top:3px;width:1px;height:15px;background:#d4d4d4;"></div>
<div class="a" style="left:1717px;top:3px;width:1px;height:15px;background:#d4d4d4;"></div>
<div class="a" style="left:1781px;top:3px;width:1px;height:15px;background:#d4d4d4;"></div>
<div class="a" style="left:1845px;top:3px;width:1px;height:15px;background:#d4d4d4;"></div>
<div class="a" style="left:25px;top:18px;width:1873px;height:1px;background:#a6a6a6;"></div>
<div class="a" style="left:237px;top:2px;width:1px;height:15px;background:#b5b5b5;"></div>
<div class="a" style="left:326px;top:2px;width:1px;height:15px;background:#b5b5b5;"></div>
<div class="a" style="left:237px;top:17px;width:90px;height:2px;background:#12733c;"></div>
<span class="t" style="left:127.16px;top:2.33px;font-size:14px;transform:scaleX(0.9300);color:#3c3c3c;">A</span>
<span class="t" style="left:277.66px;top:2.33px;font-size:14px;transform:scaleX(0.9300);color:#0e6b38;">B</span>
<span class="t" style="left:366.30px;top:2.33px;font-size:14px;transform:scaleX(0.9300);color:#3c3c3c;">C</span>
<span class="t" style="left:455.30px;top:2.33px;font-size:14px;transform:scaleX(0.9300);color:#3c3c3c;">D</span>
<span class="t" style="left:544.66px;top:2.33px;font-size:14px;transform:scaleX(0.9300);color:#3c3c3c;">E</span>
<span class="t" style="left:634.02px;top:2.33px;font-size:14px;transform:scaleX(0.9300);color:#3c3c3c;">F</span>
<span class="t" style="left:721.94px;top:2.33px;font-size:14px;transform:scaleX(0.9300);color:#3c3c3c;">G</span>
<span class="t" style="left:811.30px;top:2.33px;font-size:14px;transform:scaleX(0.9300);color:#3c3c3c;">H</span>
<span class="t" style="left:903.19px;top:2.33px;font-size:14px;transform:scaleX(0.9300);color:#3c3c3c;">I</span>
<span class="t" style="left:978.25px;top:2.33px;font-size:14px;transform:scaleX(0.9300);color:#3c3c3c;">J</span>
<span class="t" style="left:1041.16px;top:2.33px;font-size:14px;transform:scaleX(0.9300);color:#3c3c3c;">K</span>
<span class="t" style="left:1105.88px;top:2.33px;font-size:14px;transform:scaleX(0.9300);color:#3c3c3c;">L</span>
<span class="t" style="left:1168.08px;top:2.33px;font-size:14px;transform:scaleX(0.9300);color:#3c3c3c;">M</span>
<span class="t" style="left:1232.80px;top:2.33px;font-size:14px;transform:scaleX(0.9300);color:#3c3c3c;">N</span>
<span class="t" style="left:1296.44px;top:2.33px;font-size:14px;transform:scaleX(0.9300);color:#3c3c3c;">O</span>
<span class="t" style="left:1361.16px;top:2.33px;font-size:14px;transform:scaleX(0.9300);color:#3c3c3c;">P</span>
<span class="t" style="left:1424.44px;top:2.33px;font-size:14px;transform:scaleX(0.9300);color:#3c3c3c;">Q</span>
<span class="t" style="left:1488.80px;top:2.33px;font-size:14px;transform:scaleX(0.9300);color:#3c3c3c;">R</span>
<span class="t" style="left:1553.16px;top:2.33px;font-size:14px;transform:scaleX(0.9300);color:#3c3c3c;">S</span>
<span class="t" style="left:1617.52px;top:2.33px;font-size:14px;transform:scaleX(0.9300);color:#3c3c3c;">T</span>
<span class="t" style="left:1680.80px;top:2.33px;font-size:14px;transform:scaleX(0.9300);color:#3c3c3c;">U</span>
<span class="t" style="left:1745.16px;top:2.33px;font-size:14px;transform:scaleX(0.9300);color:#3c3c3c;">V</span>
<span class="t" style="left:1807.36px;top:2.33px;font-size:14px;transform:scaleX(0.9300);color:#3c3c3c;">W</span>
<span class="t" style="left:1873.16px;top:2.33px;font-size:14px;transform:scaleX(0.9300);color:#3c3c3c;">X</span>
<div class="a" style="left:0px;top:0px;width:26px;height:19px;"><svg width="26" height="19" style="display:block"><path d="M22.200 6.500v8.500H13.700z" fill="#dadada"/></svg></div>
<div class="a" style="left:0px;top:19px;width:26px;height:712px;background:#f0f0f0;"></div>
<div class="a" style="left:0px;top:559px;width:26px;height:21px;background:#e2e2e2;"></div>
<div class="a" style="left:2px;top:39px;width:23px;height:1px;background:#dcdcdc;"></div>
<div class="a" style="left:2px;top:59px;width:23px;height:1px;background:#dcdcdc;"></div>
<div class="a" style="left:2px;top:79px;width:23px;height:1px;background:#dcdcdc;"></div>
<div class="a" style="left:2px;top:99px;width:23px;height:1px;background:#dcdcdc;"></div>
<div class="a" style="left:2px;top:119px;width:23px;height:1px;background:#dcdcdc;"></div>
<div class="a" style="left:2px;top:139px;width:23px;height:1px;background:#dcdcdc;"></div>
<div class="a" style="left:2px;top:159px;width:23px;height:1px;background:#dcdcdc;"></div>
<div class="a" style="left:2px;top:179px;width:23px;height:1px;background:#dcdcdc;"></div>
<div class="a" style="left:2px;top:199px;width:23px;height:1px;background:#dcdcdc;"></div>
<div class="a" style="left:2px;top:219px;width:23px;height:1px;background:#dcdcdc;"></div>
<div class="a" style="left:2px;top:239px;width:23px;height:1px;background:#dcdcdc;"></div>
<div class="a" style="left:2px;top:259px;width:23px;height:1px;background:#dcdcdc;"></div>
<div class="a" style="left:2px;top:279px;width:23px;height:1px;background:#dcdcdc;"></div>
<div class="a" style="left:2px;top:299px;width:23px;height:1px;background:#dcdcdc;"></div>
<div class="a" style="left:2px;top:319px;width:23px;height:1px;background:#dcdcdc;"></div>
<div class="a" style="left:2px;top:339px;width:23px;height:1px;background:#dcdcdc;"></div>
<div class="a" style="left:2px;top:359px;width:23px;height:1px;background:#dcdcdc;"></div>
<div class="a" style="left:2px;top:379px;width:23px;height:1px;background:#dcdcdc;"></div>
<div class="a" style="left:2px;top:399px;width:23px;height:1px;background:#dcdcdc;"></div>
<div class="a" style="left:2px;top:419px;width:23px;height:1px;background:#dcdcdc;"></div>
<div class="a" style="left:2px;top:439px;width:23px;height:1px;background:#dcdcdc;"></div>
<div class="a" style="left:2px;top:459px;width:23px;height:1px;background:#dcdcdc;"></div>
<div class="a" style="left:2px;top:479px;width:23px;height:1px;background:#dcdcdc;"></div>
<div class="a" style="left:2px;top:499px;width:23px;height:1px;background:#dcdcdc;"></div>
<div class="a" style="left:2px;top:519px;width:23px;height:1px;background:#dcdcdc;"></div>
<div class="a" style="left:2px;top:539px;width:23px;height:1px;background:#dcdcdc;"></div>
<div class="a" style="left:2px;top:559px;width:23px;height:1px;background:#dcdcdc;"></div>
<div class="a" style="left:2px;top:579px;width:23px;height:1px;background:#dcdcdc;"></div>
<div class="a" style="left:2px;top:599px;width:23px;height:1px;background:#dcdcdc;"></div>
<div class="a" style="left:2px;top:619px;width:23px;height:1px;background:#dcdcdc;"></div>
<div class="a" style="left:2px;top:639px;width:23px;height:1px;background:#dcdcdc;"></div>
<div class="a" style="left:2px;top:659px;width:23px;height:1px;background:#dcdcdc;"></div>
<div class="a" style="left:2px;top:679px;width:23px;height:1px;background:#dcdcdc;"></div>
<div class="a" style="left:2px;top:699px;width:23px;height:1px;background:#dcdcdc;"></div>
<div class="a" style="left:2px;top:719px;width:23px;height:1px;background:#dcdcdc;"></div>
<div class="a" style="left:25px;top:19px;width:1px;height:712px;background:#a6a6a6;"></div>
<div class="a" style="left:0px;top:559px;width:24px;height:1px;background:#bdbdbd;"></div>
<div class="a" style="left:0px;top:579px;width:24px;height:1px;background:#bdbdbd;"></div>
<div class="a" style="left:24px;top:559px;width:2px;height:21px;background:#12733c;"></div>
<span class="t" style="left:9.40px;top:22.13px;font-size:14px;transform:scaleX(0.9000);color:#3a3a3a;">1</span>
<span class="t" style="left:9.40px;top:42.13px;font-size:14px;transform:scaleX(0.9000);color:#3a3a3a;">2</span>
<span class="t" style="left:9.40px;top:62.13px;font-size:14px;transform:scaleX(0.9000);color:#3a3a3a;">3</span>
<span class="t" style="left:9.40px;top:82.13px;font-size:14px;transform:scaleX(0.9000);color:#3a3a3a;">4</span>
<span class="t" style="left:9.40px;top:102.13px;font-size:14px;transform:scaleX(0.9000);color:#3a3a3a;">5</span>
<span class="t" style="left:9.40px;top:122.13px;font-size:14px;transform:scaleX(0.9000);color:#3a3a3a;">6</span>
<span class="t" style="left:9.40px;top:142.13px;font-size:14px;transform:scaleX(0.9000);color:#3a3a3a;">7</span>
<span class="t" style="left:9.40px;top:162.13px;font-size:14px;transform:scaleX(0.9000);color:#3a3a3a;">8</span>
<span class="t" style="left:9.40px;top:182.13px;font-size:14px;transform:scaleX(0.9000);color:#3a3a3a;">9</span>
<span class="t" style="left:5.89px;top:202.13px;font-size:14px;transform:scaleX(0.9000);color:#3a3a3a;">10</span>
<span class="t" style="left:6.36px;top:222.13px;font-size:14px;transform:scaleX(0.9000);color:#3a3a3a;">11</span>
<span class="t" style="left:5.89px;top:242.13px;font-size:14px;transform:scaleX(0.9000);color:#3a3a3a;">12</span>
<span class="t" style="left:5.89px;top:262.13px;font-size:14px;transform:scaleX(0.9000);color:#3a3a3a;">13</span>
<span class="t" style="left:5.89px;top:282.13px;font-size:14px;transform:scaleX(0.9000);color:#3a3a3a;">14</span>
<span class="t" style="left:5.89px;top:302.13px;font-size:14px;transform:scaleX(0.9000);color:#3a3a3a;">15</span>
<span class="t" style="left:5.89px;top:322.13px;font-size:14px;transform:scaleX(0.9000);color:#3a3a3a;">16</span>
<span class="t" style="left:5.89px;top:342.13px;font-size:14px;transform:scaleX(0.9000);color:#3a3a3a;">17</span>
<span class="t" style="left:5.89px;top:362.13px;font-size:14px;transform:scaleX(0.9000);color:#3a3a3a;">18</span>
<span class="t" style="left:5.89px;top:382.13px;font-size:14px;transform:scaleX(0.9000);color:#3a3a3a;">19</span>
<span class="t" style="left:5.89px;top:402.13px;font-size:14px;transform:scaleX(0.9000);color:#3a3a3a;">20</span>
<span class="t" style="left:5.89px;top:422.13px;font-size:14px;transform:scaleX(0.9000);color:#3a3a3a;">21</span>
<span class="t" style="left:5.89px;top:442.13px;font-size:14px;transform:scaleX(0.9000);color:#3a3a3a;">22</span>
<span class="t" style="left:5.89px;top:462.13px;font-size:14px;transform:scaleX(0.9000);color:#3a3a3a;">23</span>
<span class="t" style="left:5.89px;top:482.13px;font-size:14px;transform:scaleX(0.9000);color:#3a3a3a;">24</span>
<span class="t" style="left:5.89px;top:502.13px;font-size:14px;transform:scaleX(0.9000);color:#3a3a3a;">25</span>
<span class="t" style="left:5.89px;top:522.13px;font-size:14px;transform:scaleX(0.9000);color:#3a3a3a;">26</span>
<span class="t" style="left:5.89px;top:542.13px;font-size:14px;transform:scaleX(0.9000);color:#3a3a3a;">27</span>
<span class="t" style="left:5.89px;top:562.13px;font-size:14px;transform:scaleX(0.9000);color:#0e6b38;">28</span>
<span class="t" style="left:5.89px;top:582.13px;font-size:14px;transform:scaleX(0.9000);color:#3a3a3a;">29</span>
<span class="t" style="left:5.89px;top:602.13px;font-size:14px;transform:scaleX(0.9000);color:#3a3a3a;">30</span>
<span class="t" style="left:5.89px;top:622.13px;font-size:14px;transform:scaleX(0.9000);color:#3a3a3a;">31</span>
<span class="t" style="left:5.89px;top:642.13px;font-size:14px;transform:scaleX(0.9000);color:#3a3a3a;">32</span>
<span class="t" style="left:5.89px;top:662.13px;font-size:14px;transform:scaleX(0.9000);color:#3a3a3a;">33</span>
<span class="t" style="left:5.89px;top:682.13px;font-size:14px;transform:scaleX(0.9000);color:#3a3a3a;">34</span>
<span class="t" style="left:5.89px;top:702.13px;font-size:14px;transform:scaleX(0.9000);color:#3a3a3a;">35</span>
<span class="t" style="left:5.89px;top:722.13px;font-size:14px;transform:scaleX(0.9000);color:#3a3a3a;">36</span>
</div>
<div class="a" style="left:1898px;top:247px;width:22px;height:731px;background:#f0f0f0;"></div>
<div class="a" style="left:1901px;top:249px;width:17px;height:731px;background:#f6f6f6;border-radius:8.500px;"></div>
<svg class="a" style="left:1904px;top:253px" width="12" height="9" viewBox="1904 253 12 9"><path d="M1905.300 260.800 1909.600 254.200l4.300 6.600z" fill="#707070" stroke="#707070" stroke-width=".800" stroke-linejoin="round"/></svg>
<div class="a" style="left:1905px;top:266px;width:9px;height:501.5px;background:#707070;border-radius:4.500px;"></div>
<svg class="a" style="left:1904px;top:967px" width="12" height="10" viewBox="1904 967 12 10"><path d="M1905.800 969.300 1909.600 975.500l3.800-6.200z" fill="#707070" stroke="#707070" stroke-width=".800" stroke-linejoin="round"/></svg>
<div class="a" style="left:0px;top:978px;width:1920px;height:32px;background:#f0f0f0;"></div>
<div class="a" style="left:112.8px;top:978px;width:82.4px;height:4px;background:#fff;"></div>
<div class="a" style="left:104px;top:978px;width:11.8px;height:6px;background:#f0f0f0;border-top-right-radius:3px;"></div>
<div class="a" style="left:192.2px;top:978px;width:11.8px;height:6px;background:#f0f0f0;border-top-left-radius:3px;"></div>
<div class="a" style="left:115.8px;top:978px;width:76.4px;height:27.8px;background:#fff;border-radius:0 0 4.500px 4.500px;box-shadow:0 .500px 1.500px rgba(0,0,0,.14);"></div>
<svg class="a" style="left:27px;top:988px;" width="9" height="11" viewBox="0 0 9 11"><path d="M7 1 1.500 5.500 7 10" fill="none" stroke="#808080" stroke-width="1.200"/></svg>
<svg class="a" style="left:60px;top:988px;" width="9" height="11" viewBox="0 0 9 11"><path d="M2 1l5.500 4.500L2 10" fill="none" stroke="#808080" stroke-width="1.200"/></svg>
<span class="t" style="left:124.20px;top:982.98px;font-size:14.5px;transform:scaleX(0.9607);color:#111;-webkit-text-stroke:0.35px #111;">Summary</span>
<div class="a" style="left:124px;top:1001px;width:60px;height:2px;background:#0e703a;"></div>
<span class="t" style="left:211.50px;top:985.88px;font-size:14.5px;transform:scaleX(0.9096);color:#242424;">Bill Review</span>
<span class="t" style="left:302.00px;top:985.88px;font-size:14.5px;transform:scaleX(0.7714);color:#242424;">CEP</span>
<span class="t" style="left:352.00px;top:985.88px;font-size:14.5px;transform:scaleX(0.9663);color:#242424;">Text Only</span>
<span class="t" style="left:436.70px;top:985.88px;font-size:14.5px;transform:scaleX(0.8894);color:#242424;">Raw</span>
<span class="t" style="left:489.60px;top:985.88px;font-size:14.5px;transform:scaleX(0.9847);color:#242424;">Original</span>
<span class="t" style="left:565.80px;top:985.88px;font-size:14.5px;transform:scaleX(0.9375);color:#242424;">Prime</span>
<span class="t" style="left:628.00px;top:985.88px;font-size:14.5px;transform:scaleX(0.9211);color:#242424;">Crosswalk</span>
<div class="a" style="left:196.1px;top:985px;width:1px;height:17.5px;background:#cdcdcd;"></div>
<div class="a" style="left:289.1px;top:985px;width:1px;height:17.5px;background:#cdcdcd;"></div>
<div class="a" style="left:338.2px;top:985px;width:1px;height:17.5px;background:#cdcdcd;"></div>
<div class="a" style="left:423.5px;top:985px;width:1px;height:17.5px;background:#cdcdcd;"></div>
<div class="a" style="left:475.5px;top:985px;width:1px;height:17.5px;background:#cdcdcd;"></div>
<div class="a" style="left:552.0px;top:985px;width:1px;height:17.5px;background:#cdcdcd;"></div>
<div class="a" style="left:614.1px;top:985px;width:1px;height:17.5px;background:#cdcdcd;"></div>
<div class="a" style="left:702.0px;top:985px;width:1px;height:17.5px;background:#cdcdcd;"></div>
<svg class="a" style="left:743px;top:987px;" width="14" height="14" viewBox="0 0 14 14"><path d="M7 1.500v11M1.500 7h11" stroke="#333" stroke-width="1.200"/></svg>
<div class="a" style="left:1154px;top:990px;width:2px;height:2px;background:#1a1a1a;"></div>
<div class="a" style="left:1154px;top:994px;width:2px;height:2px;background:#1a1a1a;"></div>
<div class="a" style="left:1154px;top:998px;width:2px;height:2px;background:#1a1a1a;"></div>
<div class="a" style="left:1171px;top:985px;width:729px;height:17px;background:#f6f6f6;border-radius:8px;"></div>
<svg class="a" style="left:1175px;top:988px;" width="8" height="11" viewBox="0 0 8 11"><path d="M7 1v9L1 5.500z" fill="#707070"/></svg>
<div class="a" style="left:1188px;top:989px;width:691px;height:9px;background:#707070;border-radius:4.500px;"></div>
<svg class="a" style="left:1888px;top:988px;" width="8" height="11" viewBox="0 0 8 11"><path d="M1 1v9l6-4.500z" fill="#707070"/></svg>
<div class="a" style="left:0px;top:1010px;width:1920px;height:23px;background:#f3f3f3;border-top:1px solid #fafafa;"></div>
<span class="t" style="left:11.50px;top:1015.14px;font-size:12px;transform:scaleX(0.9234);color:#242424;">Select destination and press ENTER or choose Paste</span>
<div class="a" style="left:1620px;top:1011px;width:40px;height:21.5px;background:#dadada;"></div>
<svg class="a" style="left:1632px;top:1013px" width="16" height="16" viewBox="1632 1013 16 16"><rect x="1633.600" y="1014.800" width="11.800" height="11.600" fill="none" stroke="#222" stroke-width="1.300"/><path d="M1633.600 1018.700h11.800M1633.600 1022.600h11.800M1637.500 1014.800v11.600M1641.500 1014.800v11.600" stroke="#222" stroke-width="1.300"/></svg>
<svg class="a" style="left:1672px;top:1013px" width="17" height="16" viewBox="1672 1013 17 16"><rect x="1673.600" y="1014.800" width="12.600" height="11.600" fill="none" stroke="#222" stroke-width="1.300"/><rect x="1676.800" y="1017.800" width="6.400" height="5.800" fill="none" stroke="#222" stroke-width="1"/><path d="M1678 1019.800h4M1678 1021.800h4" stroke="#222" stroke-width=".900"/></svg>
<svg class="a" style="left:1712px;top:1013px" width="17" height="16" viewBox="1712 1013 17 16"><rect x="1713.600" y="1015.200" width="12.600" height="11.200" fill="none" stroke="#222" stroke-width="1.300"/><path d="M1713.600 1020.900h12.600M1719.700 1015.200v5.700" fill="none" stroke="#222" stroke-width="1.300"/></svg>
<div class="a" style="left:1745.5px;top:1020.8px;width:8px;height:1.1px;background:#444;"></div>
<div class="a" style="left:1759.5px;top:1020.8px;width:99px;height:1px;background:#777;"></div>
<div class="a" style="left:1807.3px;top:1015.8px;width:4.7px;height:11.2px;background:#666;"></div>
<svg class="a" style="left:1863px;top:1016px;" width="11" height="11" viewBox="0 0 11 11"><path d="M5 1v8M1 5h8" stroke="#333" stroke-width="1.100"/></svg>
<span class="t" style="left:1885.80px;top:1014.57px;font-size:11.3px;transform:scaleX(0.8996);color:#242424;">100%</span>
<div class="a" style="left:0px;top:1032px;width:1920px;height:48px;background:#eeeeee;border-top:1px solid #c4c4c4;"></div>
<svg class="a" style="left:17px;top:1043px" width="29" height="20" viewBox="17 1043 29 20"><defs><linearGradient id="wc1" x1="0" y1="0" x2="0" y2="1"><stop offset="0" stop-color="#e4eefc"/><stop offset=".7" stop-color="#c4d8f6"/><stop offset="1" stop-color="#9cbaf0"/></linearGradient></defs><path d="M24.500 1061a5.300 5.300 0 0 1-1-10.500 7.200 7.200 0 0 1 13.800-.600 5.600 5.600 0 0 1 1.200 11.100z" fill="url(#wc1)" stroke="#a4c0f0" stroke-width=".600"/></svg>
<div class="a" style="left:30px;top:1037.8px;width:16px;height:16px;background:#c42b1c;border-radius:50%;"></div>
<span class="t" style="left:34.52px;top:1038.89px;font-size:12.5px;color:#fff;">1</span>
<span class="t" style="left:51.00px;top:1041.29px;font-size:11.5px;transform:scaleX(0.8847);color:#1a1a1a;">19°F</span>
<span class="t" style="left:51.00px;top:1057.39px;font-size:11.5px;transform:scaleX(1.0336);color:#5a5a5a;">Cloudy</span>
<svg class="a" style="left:572px;top:1044px" width="26" height="26" viewBox="572 1044 26 26"><defs><linearGradient id="wg" gradientUnits="userSpaceOnUse" x1="572.800" y1="1044.800" x2="596.200" y2="1068.200"><stop offset="0" stop-color="#52ccfa"/><stop offset=".5" stop-color="#1c94e8"/><stop offset="1" stop-color="#0768d0"/></linearGradient></defs><g fill="url(#wg)"><rect x="572.800" y="1044.800" width="11.200" height="11.200" rx=".700"/><rect x="585" y="1044.800" width="11.200" height="11.200" rx=".700"/><rect x="572.800" y="1057" width="11.200" height="11.200" rx=".700"/><rect x="585" y="1057" width="11.200" height="11.200" rx=".700"/></g></svg>
<div class="a" style="left:609.5px;top:1040px;width:219px;height:31.5px;background:#fbfbfb;border:1px solid #dcdcdc;border-bottom-color:#cfcfcf;border-radius:16px;"></div>
<svg class="a" style="left:620px;top:1047px;" width="17" height="17" viewBox="0 0 17 17"><circle cx="7" cy="7" r="5.300" fill="none" stroke="#222" stroke-width="1.700"/><path d="M11 11l4.500 4.500" stroke="#222" stroke-width="1.800" stroke-linecap="round"/></svg>
<span class="t" style="left:646.30px;top:1048.63px;font-size:14px;transform:scaleX(0.9017);color:#5a5a5a;">Search</span>
<svg class="a" style="left:840px;top:1043px" width="27" height="26" viewBox="840 1043 27 26"><defs><linearGradient id="tv1" x1="0" y1="0" x2="1" y2="1"><stop offset="0" stop-color="#fff"/><stop offset="1" stop-color="#dedede"/></linearGradient><linearGradient id="tv2" x1="0" y1="0" x2="1" y2="1"><stop offset="0" stop-color="#d6d6d6"/><stop offset="1" stop-color="#808080"/></linearGradient><linearGradient id="tv3" x1="0" y1="0" x2="0" y2="1"><stop offset="0" stop-color="#3a3a3a"/><stop offset="1" stop-color="#111"/></linearGradient></defs><rect x="841" y="1051.100" width="17.900" height="15.800" rx="1.200" fill="url(#tv3)"/><rect x="847.300" y="1044.800" width="17.400" height="15.500" rx="1.200" fill="url(#tv1)"/><path d="M847.300 1051.100h11.600v9.200h-10.400a1.200 1.200 0 0 1-1.200-1.200z" fill="url(#tv2)"/></svg>
<svg class="a" style="left:884px;top:1044px" width="26" height="24" viewBox="884 1044 26 24"><defs><linearGradient id="fe1" x1="0" y1="0" x2="0" y2="1"><stop offset="0" stop-color="#ffdb6a"/><stop offset="1" stop-color="#f8be2c"/></linearGradient></defs><path d="M885.100 1046.300a1.200 1.200 0 0 1 1.200-1.200h6.400l2.300 2.600h12.700a1.200 1.200 0 0 1 1.200 1.200v2H885.100z" fill="#e6a40e"/><rect x="885.100" y="1047.900" width="23.800" height="18.500" rx="1.200" fill="url(#fe1)"/><path d="M889.200 1066.400v-4.800a2 2 0 0 1 2-2h10.800a2 2 0 0 1 2 2v4.800z" fill="#2389dd"/><path d="M892 1063.100h9.200" stroke="#1670c0" stroke-width="1.200"/></svg>
<div class="a" style="left:894.0px;top:1072px;width:5.8px;height:2.8px;background:#8a8a8a;border-radius:1.400px;"></div>
<svg class="a" style="left:928px;top:1043px" width="27" height="26" viewBox="928 1043 27 26"><defs><linearGradient id="eg1" x1="0" y1="0" x2="1" y2="0"><stop offset="0" stop-color="#2ab6e8"/><stop offset=".55" stop-color="#2fc4c8"/><stop offset="1" stop-color="#6fdc4c"/></linearGradient><linearGradient id="eg2" x1="0" y1="0" x2="0" y2="1"><stop offset="0" stop-color="#1b8fdc"/><stop offset="1" stop-color="#0c4f9e"/></linearGradient></defs><g transform="translate(929 1044)"><path d="M.200 11C1 4.500 6 0 12 0c7 0 12 5 12 10.500 0 4.500-3.500 6.800-7 6.800-2.200 0-3.400-.700-3.400-.700 1.200-1 2-2.600 2-4.300 0-3.300-3.100-6-6.800-6C5 6.300 1.500 8.300.200 11z" fill="url(#eg1)"/><path d="M.200 11C1.500 8.300 5 6.300 8.800 6.300 8.800 6.300 9.300 9 9.300 12c0 5 3.700 8.600 8.200 8.600 2 0 3.500-.500 4.500-1.100-2 3-5.500 4.500-9.500 4.500C5.500 24 0 18.500 0 12z" fill="url(#eg2)"/><path d="M3.800 14.800v-1a1.300 1.300 0 0 1 1.300-1.300h2a1.300 1.300 0 0 1 1.300 1.300v1" fill="none" stroke="#7a4a10" stroke-width="1"/><rect x="0" y="14.600" width="12" height="9.400" rx="1" fill="#ad650a"/><path d="M0 15.600a1 1 0 0 1 1-1h10a1 1 0 0 1 1 1v3.300H0z" fill="#d68c14"/><rect x="5.100" y="18" width="1.900" height="2" fill="#f7d24a"/></g></svg>
<div class="a" style="left:938.0px;top:1072px;width:5.8px;height:2.8px;background:#8a8a8a;border-radius:1.400px;"></div>
<svg class="a" style="left:971px;top:1039px" width="31" height="30" viewBox="971 1039 31 30"><defs><linearGradient id="tm1" x1="0" y1="0" x2="0" y2="1"><stop offset="0" stop-color="#8f93f7"/><stop offset="1" stop-color="#6c72e4"/></linearGradient></defs><rect x="986.500" y="1054.200" width="8.500" height="11.800" rx="2.600" fill="#5558c8"/><circle cx="981.400" cy="1047.700" r="3.400" fill="#8f93f7"/><path d="M975.700 1053.800a1.500 1.500 0 0 1 1.500-1.500h10.600a1.500 1.500 0 0 1 1.500 1.500v7.600c0 3.200-3 5.500-6.800 5.500s-6.800-2.300-6.800-5.500z" fill="url(#tm1)"/><rect x="972.900" y="1055.800" width="9.900" height="9.200" rx="1.500" fill="#454ab4"/><path d="M975.300 1058h5.100M977.850 1058v5.300" stroke="#fff" stroke-width="1.500"/><circle cx="994" cy="1047" r="7.300" fill="#f4dfe0"/><circle cx="994" cy="1047" r="6.900" fill="#c50f1f"/></svg>
<div class="a" style="left:982.1px;top:1072px;width:5.8px;height:2.8px;background:#8a8a8a;border-radius:1.400px;"></div>
<svg class="a" style="left:1016px;top:1042px" width="28" height="28" viewBox="1016 1042 28 28"><defs><linearGradient id="rd1" x1="0" y1="0" x2="1" y2="0"><stop offset="0" stop-color="#0a12c4"/><stop offset=".4" stop-color="#2a3ce0"/><stop offset=".75" stop-color="#b4c4f8"/><stop offset="1" stop-color="#8aa4f0"/></linearGradient></defs><ellipse cx="1026.500" cy="1064.300" rx="5" ry="2.200" fill="#c9c9c9"/><path d="M1024.500 1058.500l5 .600-.800 5h-3z" fill="#dcdcdc"/><path d="M1019.600 1044.600 1038.900 1046.600 1037.400 1059.700 1018.200 1057.700z" fill="#d4d4d4"/><path d="M1020.600 1045.800 1037.700 1047.600 1036.400 1058.500 1019.400 1056.700z" fill="url(#rd1)"/><circle cx="1035.300" cy="1062.200" r="5.600" fill="#ececec" stroke="#a8a8a8" stroke-width=".900"/><path d="M1032.300 1059.900l1.900 2.300-1.900 2.300M1038.300 1059.900l-1.900 2.300 1.900 2.300" fill="none" stroke="#2c9a3c" stroke-width="1.300"/></svg>
<svg class="a" style="left:1060px;top:1043px" width="26" height="26" viewBox="1060 1043 26 26"><circle cx="1073" cy="1055.800" r="11.100" fill="#fff" stroke="#0c5cb8" stroke-width="1.800"/><circle cx="1073" cy="1055.800" r="6.700" fill="none" stroke="#0c5cb8" stroke-width="2.900"/><rect x="1075" y="1054.100" width="9" height="3.400" fill="#fff"/><circle cx="1073" cy="1055.800" r="3" fill="#0c5cb8"/><path d="M1077.800 1053.300h6M1077.800 1058.300h6" stroke="#0c5cb8" stroke-width="1.500"/></svg>
<svg class="a" style="left:1104px;top:1043px" width="26" height="26" viewBox="1104 1043 26 26"><g transform="translate(1117 1055.800)"><circle r="11.800" fill="#fff"/><path d="M-10.16 -6.39A12 12 0 0 1 10.61 -5.60L0.00 -5.60A5.6 5.6 0 0 0 -4.85 2.80Z" fill="#e94235"/><path d="M10.61 -5.60A12 12 0 0 1 -0.46 11.99L4.85 2.80A5.6 5.6 0 0 0 0.00 -5.60Z" fill="#fbbc04"/><path d="M-0.46 11.99A12 12 0 0 1 -10.16 -6.39L-4.85 2.80A5.6 5.6 0 0 0 4.85 2.80Z" fill="#2da44e"/><circle r="5.600" fill="#fff"/><circle r="4.400" fill="#4285f4"/></g></svg>
<svg class="a" style="left:1148px;top:1037px" width="32" height="32" viewBox="1148 1037 32 32"><defs><linearGradient id="ol1" x1="0" y1="0" x2="1" y2="1"><stop offset="0" stop-color="#2aa4ec"/><stop offset="1" stop-color="#5ad4ff"/></linearGradient><linearGradient id="ol2" x1="0" y1="0" x2="0" y2="1"><stop offset="0" stop-color="#1a8ce4"/><stop offset="1" stop-color="#3cc8ff"/></linearGradient></defs><path d="M1151 1052 1162.500 1045.500a2.500 2.500 0 0 1 2.400 0l6.800 4v15.400a2 2 0 0 1-2 2h-16.700a2 2 0 0 1-2-2z" fill="url(#ol1)"/><path d="M1151 1060 1171.700 1051v13.900a2 2 0 0 1-2 2h-16.700a2 2 0 0 1-2-2z" fill="url(#ol2)"/><path d="M1158 1057.500 1169 1051.500l2.700 1.800-11 6.500z" fill="#1660c8"/><rect x="1149.200" y="1055.600" width="9.900" height="9.400" rx="1.600" fill="#0f5cc0"/><ellipse cx="1154.100" cy="1060.300" rx="2.300" ry="2.700" fill="none" stroke="#fff" stroke-width="1.500"/><circle cx="1170.100" cy="1046.700" r="8" fill="#4cc6f6"/><rect x="1165.300" y="1043.500" width="9.500" height="6.600" rx="1.200" fill="none" stroke="#111" stroke-width="1.200"/><path d="M1165.600 1044.500 1170.100 1047.500l4.500-3" fill="none" stroke="#111" stroke-width="1.100"/></svg>
<div class="a" style="left:1158.1px;top:1072px;width:5.8px;height:2.8px;background:#8a8a8a;border-radius:1.400px;"></div>
<svg class="a" style="left:1191px;top:1043px" width="25" height="26" viewBox="1191 1043 25 26"><defs><linearGradient id="on1" x1="0" y1="0" x2="0" y2="1"><stop offset="0" stop-color="#e678fa"/><stop offset=".5" stop-color="#c850e4"/><stop offset="1" stop-color="#9a2cbc"/></linearGradient></defs><rect x="1196.400" y="1044.700" width="17.500" height="22" rx="2.600" fill="url(#on1)"/><path d="M1208 1052.500a1.500 1.500 0 0 1 1.500-1.500h4.400v8h-5.900z" fill="#b440d0"/><path d="M1203 1059h10.900v5.100a2.600 2.600 0 0 1-2.600 2.600H1203z" fill="#8e28b0"/><rect x="1192.900" y="1054.100" width="10.100" height="10.300" rx="2.200" fill="#8418ac"/><path d="M1195.900 1062v-5.600l4.100 5.600v-5.600" fill="none" stroke="#fff" stroke-width="1.500" stroke-linejoin="round"/></svg>
<div class="a" style="left:1202.1px;top:1072px;width:5.8px;height:2.8px;background:#8a8a8a;border-radius:1.400px;"></div>
<svg class="a" style="left:1238px;top:1044px" width="22" height="23" viewBox="1238 1044 22 23"><defs><linearGradient id="pq1" x1="0" y1="0" x2="0" y2="1"><stop offset="0" stop-color="#4c1cae"/><stop offset="1" stop-color="#2a0a68"/></linearGradient></defs><rect x="1239" y="1045.700" width="19.900" height="20.100" rx="5" fill="url(#pq1)"/><circle cx="1248.400" cy="1055.600" r="3.700" fill="none" stroke="#fbeaff" stroke-width="2.300"/><path d="M1250 1057c1.500 1 1.700 2.200 2 3.300.300 1 1.300 1.200 2.200.600" fill="none" stroke="#fbeaff" stroke-width="2" stroke-linecap="round"/><circle cx="1243.200" cy="1050.300" r=".600" fill="#fff"/><circle cx="1254.800" cy="1050" r=".800" fill="#fff"/><circle cx="1243" cy="1061.300" r=".600" fill="#fff"/><circle cx="1246" cy="1048.800" r=".400" fill="#fff"/></svg>
<div class="a" style="left:1246.0px;top:1072px;width:5.8px;height:2.8px;background:#8a8a8a;border-radius:1.400px;"></div>
<div class="a" style="left:1277.5px;top:1036.7px;width:34.6px;height:38.5px;background:#f6f6f6;border-radius:4.500px;border:1px solid #e6e6e6;"></div>
<div class="a" style="left:1273.7px;top:1036.7px;width:34.6px;height:38.5px;background:#f8f8f8;border-radius:4.500px;border:1px solid #e4e4e4;"></div>
<svg class="a" style="left:1280px;top:1043px" width="24" height="26" viewBox="1280 1043 24 26"><defs><linearGradient id="xl1" x1="0" y1="0" x2="1" y2="1"><stop offset="0" stop-color="#2f9444"/><stop offset="1" stop-color="#176428"/></linearGradient></defs><rect x="1284" y="1044.700" width="18" height="22" rx="2.400" fill="url(#xl1)"/><path d="M1284 1047.100a2.400 2.400 0 0 1 2.400-2.400h6.600v7.500h-9z" fill="#6fd04e"/><path d="M1293 1044.700h6.600a2.400 2.400 0 0 1 2.400 2.400v5.100h-9z" fill="#98e668"/><path d="M1284 1052.200h9v4h-9z" fill="#52b848"/><rect x="1281" y="1054.100" width="10" height="10.800" rx="2.200" fill="#167a3e"/><path d="M1283.700 1056.700l4.600 5.700M1288.300 1056.700l-4.600 5.700" stroke="#fff" stroke-width="1.500"/></svg>
<div class="a" style="left:1285px;top:1071.9px;width:16px;height:3px;background:#0b74d8;border-radius:1.500px;"></div>
<svg class="a" style="left:1323px;top:1043px" width="25" height="26" viewBox="1323 1043 25 26"><defs><linearGradient id="wd1" x1="0" y1="0" x2="1" y2="0"><stop offset="0" stop-color="#30c8ff"/><stop offset=".6" stop-color="#48d0ff"/><stop offset="1" stop-color="#b494ff"/></linearGradient></defs><rect x="1328" y="1044.700" width="18" height="22" rx="2.400" fill="#1a7ce6"/><path d="M1328 1047.100a2.400 2.400 0 0 1 2.400-2.400h13.200a2.400 2.400 0 0 1 2.400 2.400v4.900h-18z" fill="url(#wd1)"/><path d="M1328 1059.500h18v4.800a2.400 2.400 0 0 1-2.400 2.400h-13.200a2.400 2.400 0 0 1-2.400-2.400z" fill="#0b42c6"/><rect x="1324.800" y="1054.100" width="9.900" height="10.800" rx="2.200" fill="#1040ae"/><path d="M1326.600 1056.800l1.400 5.600 1.700-4.800 1.700 4.800 1.400-5.600" fill="none" stroke="#fff" stroke-width="1.200" stroke-linejoin="round"/></svg>
<div class="a" style="left:1334.1px;top:1072px;width:5.8px;height:2.8px;background:#8a8a8a;border-radius:1.400px;"></div>
<span class="t" style="left:1856.50px;top:1041.29px;font-size:11.5px;transform:scaleX(1.0381);color:#1a1a1a;">9:30 AM</span>
<span class="t" style="left:1846.00px;top:1057.29px;font-size:11.5px;transform:scaleX(1.0633);color:#1a1a1a;">3/17/2026</span>
</body></html>
